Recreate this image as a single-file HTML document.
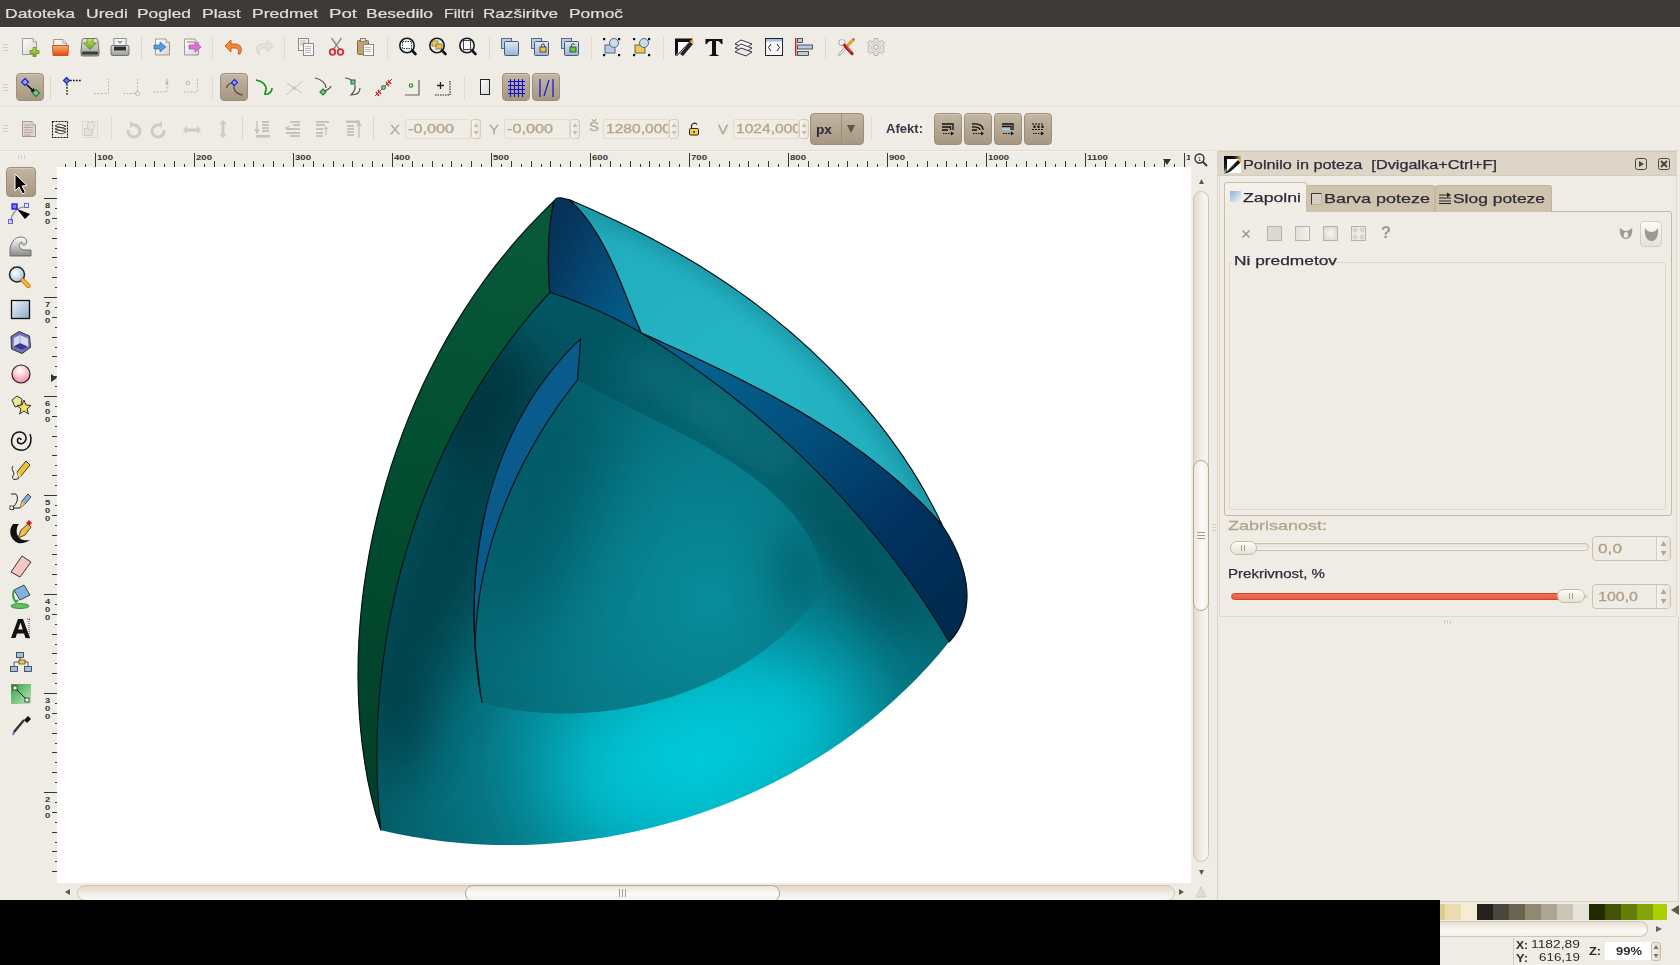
<!DOCTYPE html><html><head><meta charset="utf-8"><style>
*{box-sizing:border-box;margin:0;padding:0}
html,body{width:1680px;height:965px;overflow:hidden;background:#efebe5;font-family:"Liberation Sans",sans-serif;position:relative}
.a{position:absolute;display:block}
.t{position:absolute;white-space:nowrap;line-height:1}
</style></head><body><div class="a" style="left:0px;top:0px;width:1680px;height:27px;background:#3c3b37"></div>
<div class="a" style="left:0px;top:27px;width:1680px;height:1px;background:#f6f3ee"></div>
<div class="t" id="t0" style="left:5px;top:7px;font-size:13.5px;color:#e4dfd6;font-weight:normal;transform:scaleX(1.2952);transform-origin:0 0;-webkit-text-stroke:0.2px #e4dfd6;">Datoteka</div>
<div class="t" id="t1" style="left:86px;top:7px;font-size:13.5px;color:#e4dfd6;font-weight:normal;transform:scaleX(1.3017);transform-origin:0 0;-webkit-text-stroke:0.2px #e4dfd6;">Uredi</div>
<div class="t" id="t2" style="left:137px;top:7px;font-size:13.5px;color:#e4dfd6;font-weight:normal;transform:scaleX(1.2843);transform-origin:0 0;-webkit-text-stroke:0.2px #e4dfd6;">Pogled</div>
<div class="t" id="t3" style="left:202px;top:7px;font-size:13.5px;color:#e4dfd6;font-weight:normal;transform:scaleX(1.2993);transform-origin:0 0;-webkit-text-stroke:0.2px #e4dfd6;">Plast</div>
<div class="t" id="t4" style="left:252px;top:7px;font-size:13.5px;color:#e4dfd6;font-weight:normal;transform:scaleX(1.2933);transform-origin:0 0;-webkit-text-stroke:0.2px #e4dfd6;">Predmet</div>
<div class="t" id="t5" style="left:329px;top:7px;font-size:13.5px;color:#e4dfd6;font-weight:normal;transform:scaleX(1.3816);transform-origin:0 0;-webkit-text-stroke:0.2px #e4dfd6;">Pot</div>
<div class="t" id="t6" style="left:366px;top:7px;font-size:13.5px;color:#e4dfd6;font-weight:normal;transform:scaleX(1.2935);transform-origin:0 0;-webkit-text-stroke:0.2px #e4dfd6;">Besedilo</div>
<div class="t" id="t7" style="left:444px;top:7px;font-size:13.5px;color:#e4dfd6;font-weight:normal;transform:scaleX(1.1765);transform-origin:0 0;-webkit-text-stroke:0.2px #e4dfd6;">Filtri</div>
<div class="t" id="t8" style="left:483px;top:7px;font-size:13.5px;color:#e4dfd6;font-weight:normal;transform:scaleX(1.2655);transform-origin:0 0;-webkit-text-stroke:0.2px #e4dfd6;">Razširitve</div>
<div class="t" id="t9" style="left:569px;top:7px;font-size:13.5px;color:#e4dfd6;font-weight:normal;transform:scaleX(1.2848);transform-origin:0 0;-webkit-text-stroke:0.2px #e4dfd6;">Pomoč</div>
<div class="a" style="left:0px;top:106px;width:1680px;height:1px;background:#e6dfd4"></div>
<div class="a" style="left:0px;top:107px;width:1680px;height:1px;background:#f7f4f0"></div>
<div class="a" style="left:0px;top:150px;width:1680px;height:1px;background:#e2dbcf"></div>
<div class="a" style="left:0px;top:151px;width:1218px;height:1px;background:#f7f4f0"></div>
<div class="a" style="left:3px;top:44px;width:5px;height:1px;background:#d9ceba"></div>
<div class="a" style="left:3px;top:47px;width:5px;height:1px;background:#d9ceba"></div>
<div class="a" style="left:3px;top:50px;width:5px;height:1px;background:#d9ceba"></div>
<div class="a" style="left:3px;top:84px;width:5px;height:1px;background:#d9ceba"></div>
<div class="a" style="left:3px;top:87px;width:5px;height:1px;background:#d9ceba"></div>
<div class="a" style="left:3px;top:90px;width:5px;height:1px;background:#d9ceba"></div>
<div class="a" style="left:3px;top:125px;width:5px;height:1px;background:#d9ceba"></div>
<div class="a" style="left:3px;top:128px;width:5px;height:1px;background:#d9ceba"></div>
<div class="a" style="left:3px;top:131px;width:5px;height:1px;background:#d9ceba"></div>
<div class="a" style="left:141px;top:37px;width:1px;height:22px;background:#e0d8cb"></div>
<div class="a" style="left:212px;top:37px;width:1px;height:22px;background:#e0d8cb"></div>
<div class="a" style="left:284px;top:37px;width:1px;height:22px;background:#e0d8cb"></div>
<div class="a" style="left:387px;top:37px;width:1px;height:22px;background:#e0d8cb"></div>
<div class="a" style="left:489px;top:37px;width:1px;height:22px;background:#e0d8cb"></div>
<div class="a" style="left:591px;top:37px;width:1px;height:22px;background:#e0d8cb"></div>
<div class="a" style="left:663px;top:37px;width:1px;height:22px;background:#e0d8cb"></div>
<div class="a" style="left:825px;top:37px;width:1px;height:22px;background:#e0d8cb"></div>
<div class="a" style="left:50px;top:77px;width:1px;height:22px;background:#e0d8cb"></div>
<div class="a" style="left:212px;top:77px;width:1px;height:22px;background:#e0d8cb"></div>
<div class="a" style="left:464px;top:77px;width:1px;height:22px;background:#e0d8cb"></div>
<div class="a" style="left:111px;top:117px;width:1px;height:22px;background:#e0d8cb"></div>
<div class="a" style="left:242px;top:117px;width:1px;height:22px;background:#e0d8cb"></div>
<div class="a" style="left:373px;top:117px;width:1px;height:22px;background:#e0d8cb"></div>
<div class="a" style="left:871px;top:117px;width:1px;height:22px;background:#e0d8cb"></div>
<div class="a" style="left:16px;top:73px;width:28px;height:28px;border:1px solid #9d8e79;border-radius:4px;background:linear-gradient(#c3b6a2,#a59781);box-shadow:inset 0 1px 0 rgba(255,255,255,.25)"></div>
<div class="a" style="left:220px;top:73px;width:28px;height:28px;border:1px solid #9d8e79;border-radius:4px;background:linear-gradient(#c3b6a2,#a59781);box-shadow:inset 0 1px 0 rgba(255,255,255,.25)"></div>
<div class="a" style="left:502px;top:73px;width:28px;height:28px;border:1px solid #9d8e79;border-radius:4px;background:linear-gradient(#c3b6a2,#a59781);box-shadow:inset 0 1px 0 rgba(255,255,255,.25)"></div>
<div class="a" style="left:532px;top:73px;width:28px;height:28px;border:1px solid #9d8e79;border-radius:4px;background:linear-gradient(#c3b6a2,#a59781);box-shadow:inset 0 1px 0 rgba(255,255,255,.25)"></div>
<div class="a" style="left:934px;top:113px;width:28px;height:32px;border:1px solid #9d8e79;border-radius:4px;background:linear-gradient(#c3b6a2,#a59781);box-shadow:inset 0 1px 0 rgba(255,255,255,.25)"></div>
<div class="a" style="left:964px;top:113px;width:28px;height:32px;border:1px solid #9d8e79;border-radius:4px;background:linear-gradient(#c3b6a2,#a59781);box-shadow:inset 0 1px 0 rgba(255,255,255,.25)"></div>
<div class="a" style="left:994px;top:113px;width:28px;height:32px;border:1px solid #9d8e79;border-radius:4px;background:linear-gradient(#c3b6a2,#a59781);box-shadow:inset 0 1px 0 rgba(255,255,255,.25)"></div>
<div class="a" style="left:1024px;top:113px;width:28px;height:32px;border:1px solid #9d8e79;border-radius:4px;background:linear-gradient(#c3b6a2,#a59781);box-shadow:inset 0 1px 0 rgba(255,255,255,.25)"></div>
<div class="a" style="left:810px;top:113px;width:54px;height:32px;border:1px solid #9d8e79;border-radius:4px;background:linear-gradient(#c3b6a2,#a59781)"></div>
<div class="a" style="left:841px;top:114px;width:1px;height:30px;background:#9d8e79"></div>
<div class="a" style="left:18px;top:155px;width:1px;height:4px;background:#d9ceba"></div>
<div class="a" style="left:21px;top:155px;width:1px;height:4px;background:#d9ceba"></div>
<div class="a" style="left:24px;top:155px;width:1px;height:4px;background:#d9ceba"></div>
<div class="a" style="left:6px;top:167px;width:30px;height:30px;border:1px solid #9d8e79;border-radius:4px;background:linear-gradient(#c3b6a2,#a59781);box-shadow:inset 0 1px 0 rgba(255,255,255,.25)"></div>
<svg class="a" style="left:0px;top:150px" width="1190" height="17" viewBox="0 150 1190 17"><rect fill="#3a3430" x="65" y="164" width="1" height="3"/><rect fill="#3a3430" x="75" y="161" width="1" height="6"/><rect fill="#3a3430" x="85" y="164" width="1" height="3"/><rect fill="#3a3430" x="95" y="153" width="1" height="14"/><rect fill="#3a3430" x="105" y="164" width="1" height="3"/><rect fill="#3a3430" x="115" y="161" width="1" height="6"/><rect fill="#3a3430" x="125" y="164" width="1" height="3"/><rect fill="#3a3430" x="135" y="161" width="1" height="6"/><rect fill="#3a3430" x="145" y="164" width="1" height="3"/><rect fill="#3a3430" x="154" y="161" width="1" height="6"/><rect fill="#3a3430" x="164" y="164" width="1" height="3"/><rect fill="#3a3430" x="174" y="161" width="1" height="6"/><rect fill="#3a3430" x="184" y="164" width="1" height="3"/><rect fill="#3a3430" x="194" y="153" width="1" height="14"/><rect fill="#3a3430" x="204" y="164" width="1" height="3"/><rect fill="#3a3430" x="214" y="161" width="1" height="6"/><rect fill="#3a3430" x="224" y="164" width="1" height="3"/><rect fill="#3a3430" x="234" y="161" width="1" height="6"/><rect fill="#3a3430" x="244" y="164" width="1" height="3"/><rect fill="#3a3430" x="253" y="161" width="1" height="6"/><rect fill="#3a3430" x="263" y="164" width="1" height="3"/><rect fill="#3a3430" x="273" y="161" width="1" height="6"/><rect fill="#3a3430" x="283" y="164" width="1" height="3"/><rect fill="#3a3430" x="293" y="153" width="1" height="14"/><rect fill="#3a3430" x="303" y="164" width="1" height="3"/><rect fill="#3a3430" x="313" y="161" width="1" height="6"/><rect fill="#3a3430" x="323" y="164" width="1" height="3"/><rect fill="#3a3430" x="333" y="161" width="1" height="6"/><rect fill="#3a3430" x="343" y="164" width="1" height="3"/><rect fill="#3a3430" x="352" y="161" width="1" height="6"/><rect fill="#3a3430" x="362" y="164" width="1" height="3"/><rect fill="#3a3430" x="372" y="161" width="1" height="6"/><rect fill="#3a3430" x="382" y="164" width="1" height="3"/><rect fill="#3a3430" x="392" y="153" width="1" height="14"/><rect fill="#3a3430" x="402" y="164" width="1" height="3"/><rect fill="#3a3430" x="412" y="161" width="1" height="6"/><rect fill="#3a3430" x="422" y="164" width="1" height="3"/><rect fill="#3a3430" x="432" y="161" width="1" height="6"/><rect fill="#3a3430" x="442" y="164" width="1" height="3"/><rect fill="#3a3430" x="451" y="161" width="1" height="6"/><rect fill="#3a3430" x="461" y="164" width="1" height="3"/><rect fill="#3a3430" x="471" y="161" width="1" height="6"/><rect fill="#3a3430" x="481" y="164" width="1" height="3"/><rect fill="#3a3430" x="491" y="153" width="1" height="14"/><rect fill="#3a3430" x="501" y="164" width="1" height="3"/><rect fill="#3a3430" x="511" y="161" width="1" height="6"/><rect fill="#3a3430" x="521" y="164" width="1" height="3"/><rect fill="#3a3430" x="531" y="161" width="1" height="6"/><rect fill="#3a3430" x="541" y="164" width="1" height="3"/><rect fill="#3a3430" x="550" y="161" width="1" height="6"/><rect fill="#3a3430" x="560" y="164" width="1" height="3"/><rect fill="#3a3430" x="570" y="161" width="1" height="6"/><rect fill="#3a3430" x="580" y="164" width="1" height="3"/><rect fill="#3a3430" x="590" y="153" width="1" height="14"/><rect fill="#3a3430" x="600" y="164" width="1" height="3"/><rect fill="#3a3430" x="610" y="161" width="1" height="6"/><rect fill="#3a3430" x="620" y="164" width="1" height="3"/><rect fill="#3a3430" x="630" y="161" width="1" height="6"/><rect fill="#3a3430" x="640" y="164" width="1" height="3"/><rect fill="#3a3430" x="649" y="161" width="1" height="6"/><rect fill="#3a3430" x="659" y="164" width="1" height="3"/><rect fill="#3a3430" x="669" y="161" width="1" height="6"/><rect fill="#3a3430" x="679" y="164" width="1" height="3"/><rect fill="#3a3430" x="689" y="153" width="1" height="14"/><rect fill="#3a3430" x="699" y="164" width="1" height="3"/><rect fill="#3a3430" x="709" y="161" width="1" height="6"/><rect fill="#3a3430" x="719" y="164" width="1" height="3"/><rect fill="#3a3430" x="729" y="161" width="1" height="6"/><rect fill="#3a3430" x="739" y="164" width="1" height="3"/><rect fill="#3a3430" x="748" y="161" width="1" height="6"/><rect fill="#3a3430" x="758" y="164" width="1" height="3"/><rect fill="#3a3430" x="768" y="161" width="1" height="6"/><rect fill="#3a3430" x="778" y="164" width="1" height="3"/><rect fill="#3a3430" x="788" y="153" width="1" height="14"/><rect fill="#3a3430" x="798" y="164" width="1" height="3"/><rect fill="#3a3430" x="808" y="161" width="1" height="6"/><rect fill="#3a3430" x="818" y="164" width="1" height="3"/><rect fill="#3a3430" x="828" y="161" width="1" height="6"/><rect fill="#3a3430" x="838" y="164" width="1" height="3"/><rect fill="#3a3430" x="847" y="161" width="1" height="6"/><rect fill="#3a3430" x="857" y="164" width="1" height="3"/><rect fill="#3a3430" x="867" y="161" width="1" height="6"/><rect fill="#3a3430" x="877" y="164" width="1" height="3"/><rect fill="#3a3430" x="887" y="153" width="1" height="14"/><rect fill="#3a3430" x="897" y="164" width="1" height="3"/><rect fill="#3a3430" x="907" y="161" width="1" height="6"/><rect fill="#3a3430" x="917" y="164" width="1" height="3"/><rect fill="#3a3430" x="927" y="161" width="1" height="6"/><rect fill="#3a3430" x="937" y="164" width="1" height="3"/><rect fill="#3a3430" x="946" y="161" width="1" height="6"/><rect fill="#3a3430" x="956" y="164" width="1" height="3"/><rect fill="#3a3430" x="966" y="161" width="1" height="6"/><rect fill="#3a3430" x="976" y="164" width="1" height="3"/><rect fill="#3a3430" x="986" y="153" width="1" height="14"/><rect fill="#3a3430" x="996" y="164" width="1" height="3"/><rect fill="#3a3430" x="1006" y="161" width="1" height="6"/><rect fill="#3a3430" x="1016" y="164" width="1" height="3"/><rect fill="#3a3430" x="1026" y="161" width="1" height="6"/><rect fill="#3a3430" x="1036" y="164" width="1" height="3"/><rect fill="#3a3430" x="1045" y="161" width="1" height="6"/><rect fill="#3a3430" x="1055" y="164" width="1" height="3"/><rect fill="#3a3430" x="1065" y="161" width="1" height="6"/><rect fill="#3a3430" x="1075" y="164" width="1" height="3"/><rect fill="#3a3430" x="1085" y="153" width="1" height="14"/><rect fill="#3a3430" x="1095" y="164" width="1" height="3"/><rect fill="#3a3430" x="1105" y="161" width="1" height="6"/><rect fill="#3a3430" x="1115" y="164" width="1" height="3"/><rect fill="#3a3430" x="1125" y="161" width="1" height="6"/><rect fill="#3a3430" x="1135" y="164" width="1" height="3"/><rect fill="#3a3430" x="1144" y="161" width="1" height="6"/><rect fill="#3a3430" x="1154" y="164" width="1" height="3"/><rect fill="#3a3430" x="1164" y="161" width="1" height="6"/><rect fill="#3a3430" x="1174" y="164" width="1" height="3"/><rect fill="#3a3430" x="1184" y="153" width="1" height="14"/><text x="97" y="160" font-size="8" font-family="Liberation Sans" font-weight="bold" fill="#3a3430" textLength="16" lengthAdjust="spacingAndGlyphs">100</text><text x="196" y="160" font-size="8" font-family="Liberation Sans" font-weight="bold" fill="#3a3430" textLength="16" lengthAdjust="spacingAndGlyphs">200</text><text x="295" y="160" font-size="8" font-family="Liberation Sans" font-weight="bold" fill="#3a3430" textLength="16" lengthAdjust="spacingAndGlyphs">300</text><text x="394" y="160" font-size="8" font-family="Liberation Sans" font-weight="bold" fill="#3a3430" textLength="16" lengthAdjust="spacingAndGlyphs">400</text><text x="493" y="160" font-size="8" font-family="Liberation Sans" font-weight="bold" fill="#3a3430" textLength="16" lengthAdjust="spacingAndGlyphs">500</text><text x="592" y="160" font-size="8" font-family="Liberation Sans" font-weight="bold" fill="#3a3430" textLength="16" lengthAdjust="spacingAndGlyphs">600</text><text x="691" y="160" font-size="8" font-family="Liberation Sans" font-weight="bold" fill="#3a3430" textLength="16" lengthAdjust="spacingAndGlyphs">700</text><text x="790" y="160" font-size="8" font-family="Liberation Sans" font-weight="bold" fill="#3a3430" textLength="16" lengthAdjust="spacingAndGlyphs">800</text><text x="889" y="160" font-size="8" font-family="Liberation Sans" font-weight="bold" fill="#3a3430" textLength="16" lengthAdjust="spacingAndGlyphs">900</text><text x="988" y="160" font-size="8" font-family="Liberation Sans" font-weight="bold" fill="#3a3430" textLength="21" lengthAdjust="spacingAndGlyphs">1000</text><text x="1087" y="160" font-size="8" font-family="Liberation Sans" font-weight="bold" fill="#3a3430" textLength="21" lengthAdjust="spacingAndGlyphs">1100</text><text x="1186" y="160" font-size="8" font-family="Liberation Sans" font-weight="bold" fill="#3a3430" textLength="21" lengthAdjust="spacingAndGlyphs">1200</text><path d="M1163 159 h8 l-4 6z" fill="#333"/></svg>
<svg class="a" style="left:40px;top:167px" width="18" height="716" viewBox="40 167 18 716"><rect x="52" y="871" width="5" height="1" fill="#3a3430"/><rect x="55" y="861" width="2" height="1" fill="#3a3430"/><rect x="52" y="851" width="5" height="1" fill="#3a3430"/><rect x="55" y="842" width="2" height="1" fill="#3a3430"/><rect x="52" y="832" width="5" height="1" fill="#3a3430"/><rect x="55" y="822" width="2" height="1" fill="#3a3430"/><rect x="52" y="812" width="5" height="1" fill="#3a3430"/><rect x="55" y="802" width="2" height="1" fill="#3a3430"/><rect x="44" y="792" width="13" height="1" fill="#3a3430"/><rect x="55" y="782" width="2" height="1" fill="#3a3430"/><rect x="52" y="772" width="5" height="1" fill="#3a3430"/><rect x="55" y="762" width="2" height="1" fill="#3a3430"/><rect x="52" y="752" width="5" height="1" fill="#3a3430"/><rect x="55" y="743" width="2" height="1" fill="#3a3430"/><rect x="52" y="733" width="5" height="1" fill="#3a3430"/><rect x="55" y="723" width="2" height="1" fill="#3a3430"/><rect x="52" y="713" width="5" height="1" fill="#3a3430"/><rect x="55" y="703" width="2" height="1" fill="#3a3430"/><rect x="44" y="693" width="13" height="1" fill="#3a3430"/><rect x="55" y="683" width="2" height="1" fill="#3a3430"/><rect x="52" y="673" width="5" height="1" fill="#3a3430"/><rect x="55" y="663" width="2" height="1" fill="#3a3430"/><rect x="52" y="653" width="5" height="1" fill="#3a3430"/><rect x="55" y="644" width="2" height="1" fill="#3a3430"/><rect x="52" y="634" width="5" height="1" fill="#3a3430"/><rect x="55" y="624" width="2" height="1" fill="#3a3430"/><rect x="52" y="614" width="5" height="1" fill="#3a3430"/><rect x="55" y="604" width="2" height="1" fill="#3a3430"/><rect x="44" y="594" width="13" height="1" fill="#3a3430"/><rect x="55" y="584" width="2" height="1" fill="#3a3430"/><rect x="52" y="574" width="5" height="1" fill="#3a3430"/><rect x="55" y="564" width="2" height="1" fill="#3a3430"/><rect x="52" y="554" width="5" height="1" fill="#3a3430"/><rect x="55" y="545" width="2" height="1" fill="#3a3430"/><rect x="52" y="535" width="5" height="1" fill="#3a3430"/><rect x="55" y="525" width="2" height="1" fill="#3a3430"/><rect x="52" y="515" width="5" height="1" fill="#3a3430"/><rect x="55" y="505" width="2" height="1" fill="#3a3430"/><rect x="44" y="495" width="13" height="1" fill="#3a3430"/><rect x="55" y="485" width="2" height="1" fill="#3a3430"/><rect x="52" y="475" width="5" height="1" fill="#3a3430"/><rect x="55" y="465" width="2" height="1" fill="#3a3430"/><rect x="52" y="455" width="5" height="1" fill="#3a3430"/><rect x="55" y="446" width="2" height="1" fill="#3a3430"/><rect x="52" y="436" width="5" height="1" fill="#3a3430"/><rect x="55" y="426" width="2" height="1" fill="#3a3430"/><rect x="52" y="416" width="5" height="1" fill="#3a3430"/><rect x="55" y="406" width="2" height="1" fill="#3a3430"/><rect x="44" y="396" width="13" height="1" fill="#3a3430"/><rect x="55" y="386" width="2" height="1" fill="#3a3430"/><rect x="52" y="376" width="5" height="1" fill="#3a3430"/><rect x="55" y="366" width="2" height="1" fill="#3a3430"/><rect x="52" y="356" width="5" height="1" fill="#3a3430"/><rect x="55" y="347" width="2" height="1" fill="#3a3430"/><rect x="52" y="337" width="5" height="1" fill="#3a3430"/><rect x="55" y="327" width="2" height="1" fill="#3a3430"/><rect x="52" y="317" width="5" height="1" fill="#3a3430"/><rect x="55" y="307" width="2" height="1" fill="#3a3430"/><rect x="44" y="297" width="13" height="1" fill="#3a3430"/><rect x="55" y="287" width="2" height="1" fill="#3a3430"/><rect x="52" y="277" width="5" height="1" fill="#3a3430"/><rect x="55" y="267" width="2" height="1" fill="#3a3430"/><rect x="52" y="257" width="5" height="1" fill="#3a3430"/><rect x="55" y="248" width="2" height="1" fill="#3a3430"/><rect x="52" y="238" width="5" height="1" fill="#3a3430"/><rect x="55" y="228" width="2" height="1" fill="#3a3430"/><rect x="52" y="218" width="5" height="1" fill="#3a3430"/><rect x="55" y="208" width="2" height="1" fill="#3a3430"/><rect x="44" y="198" width="13" height="1" fill="#3a3430"/><rect x="55" y="188" width="2" height="1" fill="#3a3430"/><rect x="52" y="178" width="5" height="1" fill="#3a3430"/><text x="47.5" y="802" font-size="7.5" font-family="Liberation Sans" font-weight="bold" fill="#3a3430" text-anchor="middle" transform="translate(47.5 0) scale(1.25 1) translate(-47.5 0)">2</text><text x="47.5" y="810" font-size="7.5" font-family="Liberation Sans" font-weight="bold" fill="#3a3430" text-anchor="middle" transform="translate(47.5 0) scale(1.25 1) translate(-47.5 0)">0</text><text x="47.5" y="818" font-size="7.5" font-family="Liberation Sans" font-weight="bold" fill="#3a3430" text-anchor="middle" transform="translate(47.5 0) scale(1.25 1) translate(-47.5 0)">0</text><text x="47.5" y="703" font-size="7.5" font-family="Liberation Sans" font-weight="bold" fill="#3a3430" text-anchor="middle" transform="translate(47.5 0) scale(1.25 1) translate(-47.5 0)">3</text><text x="47.5" y="711" font-size="7.5" font-family="Liberation Sans" font-weight="bold" fill="#3a3430" text-anchor="middle" transform="translate(47.5 0) scale(1.25 1) translate(-47.5 0)">0</text><text x="47.5" y="719" font-size="7.5" font-family="Liberation Sans" font-weight="bold" fill="#3a3430" text-anchor="middle" transform="translate(47.5 0) scale(1.25 1) translate(-47.5 0)">0</text><text x="47.5" y="604" font-size="7.5" font-family="Liberation Sans" font-weight="bold" fill="#3a3430" text-anchor="middle" transform="translate(47.5 0) scale(1.25 1) translate(-47.5 0)">4</text><text x="47.5" y="612" font-size="7.5" font-family="Liberation Sans" font-weight="bold" fill="#3a3430" text-anchor="middle" transform="translate(47.5 0) scale(1.25 1) translate(-47.5 0)">0</text><text x="47.5" y="620" font-size="7.5" font-family="Liberation Sans" font-weight="bold" fill="#3a3430" text-anchor="middle" transform="translate(47.5 0) scale(1.25 1) translate(-47.5 0)">0</text><text x="47.5" y="505" font-size="7.5" font-family="Liberation Sans" font-weight="bold" fill="#3a3430" text-anchor="middle" transform="translate(47.5 0) scale(1.25 1) translate(-47.5 0)">5</text><text x="47.5" y="513" font-size="7.5" font-family="Liberation Sans" font-weight="bold" fill="#3a3430" text-anchor="middle" transform="translate(47.5 0) scale(1.25 1) translate(-47.5 0)">0</text><text x="47.5" y="521" font-size="7.5" font-family="Liberation Sans" font-weight="bold" fill="#3a3430" text-anchor="middle" transform="translate(47.5 0) scale(1.25 1) translate(-47.5 0)">0</text><text x="47.5" y="406" font-size="7.5" font-family="Liberation Sans" font-weight="bold" fill="#3a3430" text-anchor="middle" transform="translate(47.5 0) scale(1.25 1) translate(-47.5 0)">6</text><text x="47.5" y="414" font-size="7.5" font-family="Liberation Sans" font-weight="bold" fill="#3a3430" text-anchor="middle" transform="translate(47.5 0) scale(1.25 1) translate(-47.5 0)">0</text><text x="47.5" y="422" font-size="7.5" font-family="Liberation Sans" font-weight="bold" fill="#3a3430" text-anchor="middle" transform="translate(47.5 0) scale(1.25 1) translate(-47.5 0)">0</text><text x="47.5" y="307" font-size="7.5" font-family="Liberation Sans" font-weight="bold" fill="#3a3430" text-anchor="middle" transform="translate(47.5 0) scale(1.25 1) translate(-47.5 0)">7</text><text x="47.5" y="315" font-size="7.5" font-family="Liberation Sans" font-weight="bold" fill="#3a3430" text-anchor="middle" transform="translate(47.5 0) scale(1.25 1) translate(-47.5 0)">0</text><text x="47.5" y="323" font-size="7.5" font-family="Liberation Sans" font-weight="bold" fill="#3a3430" text-anchor="middle" transform="translate(47.5 0) scale(1.25 1) translate(-47.5 0)">0</text><text x="47.5" y="208" font-size="7.5" font-family="Liberation Sans" font-weight="bold" fill="#3a3430" text-anchor="middle" transform="translate(47.5 0) scale(1.25 1) translate(-47.5 0)">8</text><text x="47.5" y="216" font-size="7.5" font-family="Liberation Sans" font-weight="bold" fill="#3a3430" text-anchor="middle" transform="translate(47.5 0) scale(1.25 1) translate(-47.5 0)">0</text><text x="47.5" y="224" font-size="7.5" font-family="Liberation Sans" font-weight="bold" fill="#3a3430" text-anchor="middle" transform="translate(47.5 0) scale(1.25 1) translate(-47.5 0)">0</text><path d="M51 374 v8 l6 -4z" fill="#333"/></svg>
<div class="a" style="left:57px;top:167px;width:1134px;height:716px;background:#fff"></div>
<svg class="a" style="left:1193px;top:152px" width="16" height="16" viewBox="0 0 16 16"><circle cx="6.5" cy="6.5" r="4.5" fill="none" stroke="#333" stroke-width="1.4"/><path d="M9.5 9.5 L14 14" stroke="#333" stroke-width="1.8"/><text x="6.5" y="9" font-size="6" text-anchor="middle" font-family="Liberation Sans" fill="#333">1</text></svg>
<div class="a" style="left:1191px;top:167px;width:19px;height:717px;background:#efebe5"></div>
<div class="a" style="left:1193px;top:191px;width:16px;height:671px;border:1px solid #d3c7b3;border-radius:8px;background:linear-gradient(90deg,#e2dacd,#f3efe9 60%,#f8f6f2)"></div>
<svg class="a" style="left:1195px;top:176px" width="12" height="10" viewBox="0 0 12 10"><path d="M4 8 L6.5 3 L9 8z" fill="#5e5850"/></svg>
<svg class="a" style="left:1195px;top:868px" width="12" height="10" viewBox="0 0 12 10"><path d="M4 2 L6.5 7 L9 2z" fill="#5e5850"/></svg>
<div class="a" style="left:1193px;top:460px;width:16px;height:151px;border:1px solid #b8a88c;border-radius:8px;background:linear-gradient(90deg,#ece6dc,#fbfaf7 55%,#f4f0ea)"></div>
<div class="a" style="left:1197px;top:532px;width:8px;height:1px;background:#ab9d86"></div>
<div class="a" style="left:1197px;top:535px;width:8px;height:1px;background:#ab9d86"></div>
<div class="a" style="left:1197px;top:538px;width:8px;height:1px;background:#ab9d86"></div>
<div class="a" style="left:57px;top:883px;width:1134px;height:17px;background:#efebe5"></div>
<div class="a" style="left:77px;top:885px;width:1098px;height:16px;border:1px solid #d3c7b3;border-radius:8px;background:linear-gradient(#e2d8c8,#f3efe9 60%,#faf8f4)"></div>
<svg class="a" style="left:62px;top:887px" width="10" height="10" viewBox="0 0 10 10"><path d="M8 2 L3 5 L8 8z" fill="#5e5850"/></svg>
<svg class="a" style="left:1177px;top:887px" width="10" height="10" viewBox="0 0 10 10"><path d="M2 2 L7 5 L2 8z" fill="#5e5850"/></svg>
<div class="a" style="left:465px;top:885px;width:315px;height:17px;border:1px solid #b8a88c;border-radius:8px;background:linear-gradient(#ebe4d9,#fbfaf7 55%,#f4f0ea)"></div>
<div class="a" style="left:619px;top:889px;width:1px;height:8px;background:#ab9d86"></div>
<div class="a" style="left:622px;top:889px;width:1px;height:8px;background:#ab9d86"></div>
<div class="a" style="left:625px;top:889px;width:1px;height:8px;background:#ab9d86"></div>
<svg class="a" style="left:1192px;top:884px" width="18" height="16" viewBox="0 0 18 16"><path d="M4 13 L9 3 L14 13z" fill="#e2ddd4" stroke="#c4bcb0" stroke-width="0.6"/></svg>
<div class="a" style="left:0px;top:900px;width:1440px;height:65px;background:#000"></div>
<div class="a" style="left:1440px;top:900px;width:240px;height:65px;background:#efebe5"></div>
<div class="a" style="left:1440px;top:901px;width:236px;height:1px;background:#d9d0c2"></div>
<div class="a" style="left:1440px;top:904px;width:5px;height:16px;background:#dccb8a"></div>
<div class="a" style="left:1445px;top:904px;width:16px;height:16px;background:#e8dcb0"></div>
<div class="a" style="left:1461px;top:904px;width:16px;height:16px;background:#f3edd4"></div>
<div class="a" style="left:1477px;top:904px;width:16px;height:16px;background:#23221e"></div>
<div class="a" style="left:1493px;top:904px;width:16px;height:16px;background:#48453a"></div>
<div class="a" style="left:1509px;top:904px;width:16px;height:16px;background:#6a6453"></div>
<div class="a" style="left:1525px;top:904px;width:16px;height:16px;background:#928a70"></div>
<div class="a" style="left:1541px;top:904px;width:16px;height:16px;background:#ada593"></div>
<div class="a" style="left:1557px;top:904px;width:16px;height:16px;background:#c9c5b9"></div>
<div class="a" style="left:1573px;top:904px;width:16px;height:16px;background:#e5e3dc"></div>
<div class="a" style="left:1589px;top:904px;width:16px;height:16px;background:#222a02"></div>
<div class="a" style="left:1605px;top:904px;width:16px;height:16px;background:#425305"></div>
<div class="a" style="left:1621px;top:904px;width:16px;height:16px;background:#637d07"></div>
<div class="a" style="left:1637px;top:904px;width:16px;height:16px;background:#84a608"></div>
<div class="a" style="left:1653px;top:904px;width:14px;height:16px;background:#a8d102"></div>
<svg class="a" style="left:1668px;top:903px" width="12" height="14" viewBox="0 0 12 14"><path d="M11 2 L3 7 L11 12z" fill="#5e5950"/></svg>
<div class="a" style="left:1440px;top:921px;width:208px;height:16px;border:1px solid #d2c5b0;border-left:none;border-radius:0 8px 8px 0;background:linear-gradient(#e6dfd3,#fbf9f6 60%,#f3efe9)"></div>
<svg class="a" style="left:1654px;top:924px" width="10" height="10" viewBox="0 0 10 10"><path d="M2 2 L8 5 L2 8z" fill="#6b655c"/></svg>
<div class="a" style="left:1513px;top:938px;width:1px;height:27px;background:#d6cdbd"></div>
<div class="t" id="t10" style="left:1516px;top:940px;font-size:10.5px;color:#2e2a27;font-weight:bold;transform:scaleX(1.1429);transform-origin:0 0;">X:</div>
<div class="t" id="t11" style="left:1531px;top:939px;font-size:11.5px;color:#2e2a27;font-weight:normal;transform:scaleX(1.2034);transform-origin:0 0;">1182,89</div>
<div class="t" id="t12" style="left:1516px;top:953px;font-size:10.5px;color:#2e2a27;font-weight:bold;transform:scaleX(1.2327);transform-origin:0 0;">Y:</div>
<div class="t" id="t13" style="left:1539px;top:952px;font-size:11.5px;color:#2e2a27;font-weight:normal;transform:scaleX(1.1652);transform-origin:0 0;">616,19</div>
<div class="t" id="t14" style="left:1589px;top:946px;font-size:11px;color:#2e2a27;font-weight:bold;transform:scaleX(1.1549);transform-origin:0 0;">Z:</div>
<div class="a" style="left:1605px;top:942px;width:46px;height:18px;background:#fff"></div>
<div class="t" id="t15" style="left:1616px;top:946px;font-size:11.5px;color:#2e2a27;font-weight:bold;transform:scaleX(1.1289);transform-origin:0 0;">99%</div>
<div class="a" style="left:1651px;top:942px;width:10px;height:19px;border:1px solid #c9bca7;border-radius:3px;background:linear-gradient(90deg,#f3efe9,#e4ddd1)"></div>
<svg class="a" style="left:1652px;top:943px" width="8" height="17" viewBox="0 0 8 17"><path d="M1.5 6 L4 2 L6.5 6z M1.5 11 L4 15 L6.5 11z" fill="#7b756b"/></svg>
<svg class="a" style="left:0px;top:0px" width="1680" height="965" viewBox="0 0 1680 965"><defs>
<clipPath id="cvclip"><rect x="57" y="167" width="1134" height="716"/></clipPath>
<clipPath id="silc"><path d="M554.0 201.0 L541.4 213.4 L529.2 226.1 L517.4 239.1 L506.1 252.5 L495.1 266.2 L484.6 280.2 L474.5 294.5 L464.8 309.0 L455.6 323.9 L446.7 338.9 L438.3 354.3 L430.3 369.8 L422.6 385.6 L415.5 401.6 L408.7 417.7 L402.3 434.1 L396.4 450.6 L390.8 467.3 L385.7 484.2 L381.0 501.1 L376.7 518.2 L372.8 535.4 L369.4 552.7 L366.4 570.1 L363.8 587.5 L361.7 605.0 L360.1 622.6 L358.9 640.1 L358.2 657.7 L358.0 675.2 L358.3 692.8 L359.1 710.3 L360.4 727.7 L362.3 745.1 L364.7 762.4 L367.6 779.6 L371.3 796.7 L375.6 813.5 L380.8 830.2 L396.6 833.7 L412.4 836.7 L428.4 839.3 L444.4 841.4 L460.5 843.0 L476.6 844.2 L492.7 844.9 L508.9 845.1 L525.1 844.9 L541.2 844.2 L557.4 843.1 L573.5 841.6 L589.6 839.6 L605.6 837.2 L621.5 834.3 L637.4 831.0 L653.2 827.3 L668.8 823.1 L684.4 818.5 L699.7 813.5 L715.0 808.1 L730.1 802.2 L745.0 796.0 L759.7 789.3 L774.2 782.2 L788.5 774.7 L802.6 766.8 L816.5 758.6 L830.0 749.9 L843.4 740.8 L856.4 731.3 L869.2 721.5 L881.6 711.2 L893.8 700.6 L905.6 689.6 L917.0 678.2 L928.1 666.4 L938.9 654.3 L949.2 641.8 L951.5 639.3 L953.7 636.7 L955.7 634.0 L957.5 631.3 L959.1 628.5 L960.6 625.6 L961.9 622.7 L963.0 619.8 L964.0 616.9 L964.9 613.8 L965.6 610.8 L966.1 607.7 L966.5 604.6 L966.8 601.5 L967.0 598.4 L967.0 595.2 L966.9 592.0 L966.7 588.9 L966.4 585.7 L966.0 582.5 L965.4 579.3 L964.8 576.1 L964.1 572.9 L963.2 569.8 L962.3 566.6 L961.3 563.5 L960.3 560.4 L959.1 557.3 L957.9 554.2 L956.6 551.2 L955.2 548.2 L953.8 545.3 L952.4 542.3 L950.8 539.5 L949.3 536.7 L947.7 533.9 L946.0 531.2 L944.3 528.6 L942.6 526.0 L937.0 514.3 L931.0 502.7 L924.7 491.3 L918.2 480.1 L911.4 469.1 L904.3 458.2 L896.9 447.6 L889.3 437.1 L881.4 426.7 L873.3 416.6 L865.0 406.6 L856.4 396.8 L847.7 387.1 L838.8 377.7 L829.7 368.4 L820.4 359.3 L810.9 350.3 L801.3 341.6 L791.6 333.0 L781.6 324.6 L771.6 316.4 L761.4 308.4 L751.0 300.5 L740.5 292.9 L729.9 285.5 L719.1 278.2 L708.2 271.2 L697.2 264.3 L686.1 257.7 L674.8 251.2 L663.5 244.9 L652.0 238.7 L640.5 232.7 L628.8 226.9 L617.1 221.2 L605.3 215.7 L593.5 210.3 L581.6 205.0 L569.6 199.8 L567.5 199.3 L565.0 198.7 L562.5 198.1 L560.0 197.8 L557.6 198.1 L555.6 199.1 L554.0 201.0Z"/></clipPath>
<clipPath id="cavc"><path d="M577.5 380.0 L572.9 385.8 L568.5 391.6 L564.1 397.5 L559.7 403.5 L555.5 409.6 L551.4 415.7 L547.3 421.9 L543.3 428.2 L539.5 434.5 L535.7 440.9 L532.0 447.4 L528.4 453.9 L524.9 460.4 L521.5 467.1 L518.2 473.7 L515.0 480.5 L511.9 487.2 L509.0 494.1 L506.1 500.9 L503.4 507.8 L500.7 514.8 L498.2 521.8 L495.8 528.8 L493.5 535.9 L491.4 543.0 L489.4 550.1 L487.5 557.3 L485.7 564.5 L484.0 571.7 L482.5 578.9 L481.1 586.2 L479.9 593.5 L478.8 600.8 L477.8 608.1 L477.0 615.5 L476.3 622.8 L475.8 630.2 L475.4 637.6 L475.2 645.0 L478.9 683.2 L480.3 693.1 L482.0 703.0 L491.2 705.3 L500.5 707.4 L509.9 709.1 L519.4 710.6 L528.9 711.7 L538.5 712.6 L548.1 713.2 L557.8 713.5 L567.4 713.6 L577.1 713.3 L586.9 712.8 L596.6 712.1 L606.3 711.0 L615.9 709.7 L625.6 708.1 L635.2 706.3 L644.7 704.2 L654.2 701.8 L663.6 699.2 L673.0 696.4 L682.2 693.2 L691.4 689.8 L700.4 686.2 L709.3 682.3 L718.1 678.2 L726.7 673.8 L735.2 669.2 L743.5 664.3 L751.7 659.1 L759.6 653.7 L767.4 648.0 L774.9 642.1 L782.3 635.9 L789.4 629.4 L796.2 622.7 L802.8 615.7 L809.2 608.5 L815.2 601.0 L821.0 593.2 L821.8 584.2 L821.6 575.5 L820.5 567.1 L818.5 558.9 L815.8 550.9 L812.4 543.2 L808.3 535.8 L803.8 528.5 L798.8 521.6 L793.4 514.8 L787.7 508.3 L781.7 502.0 L775.5 496.0 L769.0 490.1 L762.4 484.5 L755.5 479.0 L748.4 473.7 L741.2 468.5 L733.8 463.6 L726.2 458.7 L718.6 454.0 L710.8 449.4 L702.9 445.0 L695.0 440.6 L687.0 436.3 L679.0 432.1 L670.9 428.0 L662.8 423.9 L654.7 419.9 L646.6 415.9 L638.6 412.0 L630.6 408.0 L622.7 404.1 L614.9 400.1 L607.1 396.2 L599.5 392.2 L592.0 388.2 L584.7 384.1 L577.5 380.0Z"/></clipPath>
<clipPath id="lightc"><path d="M569.6 199.8 L575.4 205.5 L580.8 211.4 L585.8 217.6 L590.6 224.0 L595.0 230.7 L599.2 237.5 L603.1 244.5 L606.9 251.6 L610.4 258.8 L613.8 266.2 L617.0 273.6 L620.2 281.0 L623.2 288.5 L626.2 296.0 L629.2 303.5 L632.2 311.0 L635.2 318.4 L638.3 325.8 L641.4 333.0 L649.8 336.8 L658.1 340.6 L666.5 344.4 L674.9 348.2 L683.3 352.1 L691.7 356.0 L700.1 359.9 L708.5 363.9 L716.8 367.9 L725.2 371.9 L733.5 376.0 L741.8 380.2 L750.1 384.4 L758.3 388.7 L766.5 393.0 L774.7 397.4 L782.8 401.9 L790.9 406.5 L798.9 411.1 L806.8 415.8 L814.7 420.6 L822.6 425.5 L830.4 430.5 L838.1 435.6 L845.7 440.8 L853.3 446.1 L860.7 451.5 L868.1 457.0 L875.4 462.6 L882.6 468.4 L889.7 474.2 L896.7 480.2 L903.6 486.3 L910.4 492.6 L917.1 499.0 L923.7 505.5 L930.1 512.2 L936.4 519.0 L942.6 526.0 L937.0 514.3 L931.0 502.7 L924.7 491.3 L918.2 480.1 L911.4 469.1 L904.3 458.2 L896.9 447.6 L889.3 437.1 L881.4 426.7 L873.3 416.6 L865.0 406.6 L856.4 396.8 L847.7 387.1 L838.8 377.7 L829.7 368.4 L820.4 359.3 L810.9 350.3 L801.3 341.6 L791.6 333.0 L781.6 324.6 L771.6 316.4 L761.4 308.4 L751.0 300.5 L740.5 292.9 L729.9 285.5 L719.1 278.2 L708.2 271.2 L697.2 264.3 L686.1 257.7 L674.8 251.2 L663.5 244.9 L652.0 238.7 L640.5 232.7 L628.8 226.9 L617.1 221.2 L605.3 215.7 L593.5 210.3 L581.6 205.0 L569.6 199.8Z"/></clipPath>
<clipPath id="stripc"><path d="M641.4 333.0 L649.8 336.8 L658.1 340.6 L666.5 344.4 L674.9 348.2 L683.3 352.1 L691.7 356.0 L700.1 359.9 L708.5 363.9 L716.8 367.9 L725.2 371.9 L733.5 376.0 L741.8 380.2 L750.1 384.4 L758.3 388.7 L766.5 393.0 L774.7 397.4 L782.8 401.9 L790.9 406.5 L798.9 411.1 L806.8 415.8 L814.7 420.6 L822.6 425.5 L830.4 430.5 L838.1 435.6 L845.7 440.8 L853.3 446.1 L860.7 451.5 L868.1 457.0 L875.4 462.6 L882.6 468.4 L889.7 474.2 L896.7 480.2 L903.6 486.3 L910.4 492.6 L917.1 499.0 L923.7 505.5 L930.1 512.2 L936.4 519.0 L942.6 526.0 L944.3 528.6 L946.0 531.2 L947.7 533.9 L949.3 536.7 L950.8 539.5 L952.4 542.3 L953.8 545.3 L955.2 548.2 L956.6 551.2 L957.9 554.2 L959.1 557.3 L960.3 560.4 L961.3 563.5 L962.3 566.6 L963.2 569.8 L964.1 572.9 L964.8 576.1 L965.4 579.3 L966.0 582.5 L966.4 585.7 L966.7 588.9 L966.9 592.0 L967.0 595.2 L967.0 598.4 L966.8 601.5 L966.5 604.6 L966.1 607.7 L965.6 610.8 L964.9 613.8 L964.0 616.9 L963.0 619.8 L961.9 622.7 L960.6 625.6 L959.1 628.5 L957.5 631.3 L955.7 634.0 L953.7 636.7 L951.5 639.3 L949.2 641.8 L943.4 632.1 L937.5 622.5 L931.4 612.9 L925.2 603.5 L918.9 594.1 L912.4 584.8 L905.9 575.6 L899.2 566.6 L892.4 557.6 L885.4 548.6 L878.4 539.8 L871.2 531.1 L864.0 522.5 L856.6 514.0 L849.1 505.5 L841.5 497.2 L833.8 488.9 L826.0 480.8 L818.1 472.7 L810.1 464.8 L802.0 456.9 L793.8 449.2 L785.5 441.5 L777.2 434.0 L768.7 426.5 L760.1 419.2 L751.5 411.9 L742.7 404.8 L733.9 397.7 L725.0 390.8 L716.0 383.9 L706.9 377.2 L697.8 370.6 L688.6 364.0 L679.3 357.6 L669.9 351.3 L660.5 345.1 L651.0 339.0 L641.4 333.0Z"/></clipPath>
<clipPath id="greenc"><path d="M554.0 201.0 L541.4 213.4 L529.2 226.1 L517.4 239.1 L506.1 252.5 L495.1 266.2 L484.6 280.2 L474.5 294.5 L464.8 309.0 L455.6 323.9 L446.7 338.9 L438.3 354.3 L430.3 369.8 L422.6 385.6 L415.5 401.6 L408.7 417.7 L402.3 434.1 L396.4 450.6 L390.8 467.3 L385.7 484.2 L381.0 501.1 L376.7 518.2 L372.8 535.4 L369.4 552.7 L366.4 570.1 L363.8 587.5 L361.7 605.0 L360.1 622.6 L358.9 640.1 L358.2 657.7 L358.0 675.2 L358.3 692.8 L359.1 710.3 L360.4 727.7 L362.3 745.1 L364.7 762.4 L367.6 779.6 L371.3 796.7 L375.6 813.5 L380.8 830.2 L379.4 815.5 L378.3 800.8 L377.5 786.0 L377.0 771.2 L376.9 756.4 L377.0 741.5 L377.5 726.6 L378.2 711.8 L379.3 696.9 L380.6 682.0 L382.3 667.2 L384.3 652.4 L386.5 637.6 L389.1 622.8 L392.0 608.2 L395.2 593.5 L398.6 579.0 L402.4 564.5 L406.5 550.1 L410.9 535.8 L415.5 521.6 L420.5 507.5 L425.8 493.5 L431.3 479.7 L437.2 466.0 L443.3 452.4 L449.8 439.0 L456.5 425.7 L463.5 412.6 L470.8 399.7 L478.5 386.9 L486.4 374.4 L494.5 362.0 L503.0 349.8 L511.8 337.9 L520.9 326.2 L530.2 314.7 L539.9 303.5 L549.8 292.5 L549.2 284.2 L548.8 275.8 L548.5 267.5 L548.4 259.1 L548.5 250.8 L548.7 242.4 L549.3 234.1 L550.0 225.8 L551.0 217.5 L552.4 209.2 L554.0 201.0Z"/></clipPath>
<clipPath id="facetc"><path d="M554.0 201.0 L555.6 199.1 L557.6 198.1 L560.0 197.8 L562.5 198.1 L565.0 198.7 L567.5 199.3 L569.6 199.8 L575.4 205.5 L580.8 211.4 L585.8 217.6 L590.6 224.0 L595.0 230.7 L599.2 237.5 L603.1 244.5 L606.9 251.6 L610.4 258.8 L613.8 266.2 L617.0 273.6 L620.2 281.0 L623.2 288.5 L626.2 296.0 L629.2 303.5 L632.2 311.0 L635.2 318.4 L638.3 325.8 L641.4 333.0 L633.5 328.4 L625.5 324.0 L617.4 319.8 L609.2 315.8 L600.9 311.9 L592.6 308.2 L584.2 304.7 L575.7 301.4 L567.2 298.2 L558.5 295.3 L549.8 292.5 L549.2 284.2 L548.8 275.8 L548.5 267.5 L548.4 259.1 L548.5 250.8 L548.7 242.4 L549.3 234.1 L550.0 225.8 L551.0 217.5 L552.4 209.2 L554.0 201.0Z"/></clipPath>
<radialGradient id="band" gradientUnits="userSpaceOnUse" cx="700" cy="760" r="400" gradientTransform="translate(700 760) scale(1 0.9) translate(-700 -760)">
<stop offset="0" stop-color="#00c4d4"/><stop offset="0.28" stop-color="#03a8b8"/><stop offset="0.55" stop-color="#067684"/><stop offset="0.8" stop-color="#055e6a"/><stop offset="1" stop-color="#055a66"/></radialGradient>
<radialGradient id="cavg" gradientUnits="userSpaceOnUse" cx="710" cy="600" r="290">
<stop offset="0" stop-color="#088c9a"/><stop offset="0.5" stop-color="#077a88"/><stop offset="1" stop-color="#05626e"/></radialGradient>
<linearGradient id="greeng" gradientUnits="userSpaceOnUse" x1="520" y1="230" x2="370" y2="820">
<stop offset="0" stop-color="#075839"/><stop offset="0.5" stop-color="#024c30"/><stop offset="1" stop-color="#003f27"/></linearGradient>
<linearGradient id="facetg" gradientUnits="userSpaceOnUse" x1="550" y1="250" x2="635" y2="290">
<stop offset="0" stop-color="#06335a"/><stop offset="1" stop-color="#045a88"/></linearGradient>
<radialGradient id="lightg" gradientUnits="userSpaceOnUse" cx="740" cy="380" r="300">
<stop offset="0" stop-color="#25b6c6"/><stop offset="0.6" stop-color="#22aebe"/><stop offset="1" stop-color="#1f9cac"/></radialGradient>
<linearGradient id="stripg" gradientUnits="userSpaceOnUse" x1="700" y1="360" x2="950" y2="620">
<stop offset="0" stop-color="#05628e"/><stop offset="0.35" stop-color="#034f7c"/><stop offset="0.7" stop-color="#013260"/><stop offset="1" stop-color="#002a4e"/></linearGradient>
<filter id="bl20" x="-150%" y="-150%" width="400%" height="400%"><feGaussianBlur stdDeviation="20"/></filter>
<filter id="bl35" x="-250%" y="-250%" width="600%" height="600%"><feGaussianBlur stdDeviation="35"/></filter>
<filter id="bl8" x="-50%" y="-50%" width="200%" height="200%"><feGaussianBlur stdDeviation="8"/></filter>
<filter id="bl4" x="-50%" y="-50%" width="200%" height="200%"><feGaussianBlur stdDeviation="3"/></filter>
<filter id="bl2" x="-10%" y="-10%" width="120%" height="120%"><feGaussianBlur stdDeviation="1.5"/></filter>
</defs><g clip-path="url(#cvclip)"><path d="M554.0 201.0 L541.4 213.4 L529.2 226.1 L517.4 239.1 L506.1 252.5 L495.1 266.2 L484.6 280.2 L474.5 294.5 L464.8 309.0 L455.6 323.9 L446.7 338.9 L438.3 354.3 L430.3 369.8 L422.6 385.6 L415.5 401.6 L408.7 417.7 L402.3 434.1 L396.4 450.6 L390.8 467.3 L385.7 484.2 L381.0 501.1 L376.7 518.2 L372.8 535.4 L369.4 552.7 L366.4 570.1 L363.8 587.5 L361.7 605.0 L360.1 622.6 L358.9 640.1 L358.2 657.7 L358.0 675.2 L358.3 692.8 L359.1 710.3 L360.4 727.7 L362.3 745.1 L364.7 762.4 L367.6 779.6 L371.3 796.7 L375.6 813.5 L380.8 830.2 L396.6 833.7 L412.4 836.7 L428.4 839.3 L444.4 841.4 L460.5 843.0 L476.6 844.2 L492.7 844.9 L508.9 845.1 L525.1 844.9 L541.2 844.2 L557.4 843.1 L573.5 841.6 L589.6 839.6 L605.6 837.2 L621.5 834.3 L637.4 831.0 L653.2 827.3 L668.8 823.1 L684.4 818.5 L699.7 813.5 L715.0 808.1 L730.1 802.2 L745.0 796.0 L759.7 789.3 L774.2 782.2 L788.5 774.7 L802.6 766.8 L816.5 758.6 L830.0 749.9 L843.4 740.8 L856.4 731.3 L869.2 721.5 L881.6 711.2 L893.8 700.6 L905.6 689.6 L917.0 678.2 L928.1 666.4 L938.9 654.3 L949.2 641.8 L951.5 639.3 L953.7 636.7 L955.7 634.0 L957.5 631.3 L959.1 628.5 L960.6 625.6 L961.9 622.7 L963.0 619.8 L964.0 616.9 L964.9 613.8 L965.6 610.8 L966.1 607.7 L966.5 604.6 L966.8 601.5 L967.0 598.4 L967.0 595.2 L966.9 592.0 L966.7 588.9 L966.4 585.7 L966.0 582.5 L965.4 579.3 L964.8 576.1 L964.1 572.9 L963.2 569.8 L962.3 566.6 L961.3 563.5 L960.3 560.4 L959.1 557.3 L957.9 554.2 L956.6 551.2 L955.2 548.2 L953.8 545.3 L952.4 542.3 L950.8 539.5 L949.3 536.7 L947.7 533.9 L946.0 531.2 L944.3 528.6 L942.6 526.0 L937.0 514.3 L931.0 502.7 L924.7 491.3 L918.2 480.1 L911.4 469.1 L904.3 458.2 L896.9 447.6 L889.3 437.1 L881.4 426.7 L873.3 416.6 L865.0 406.6 L856.4 396.8 L847.7 387.1 L838.8 377.7 L829.7 368.4 L820.4 359.3 L810.9 350.3 L801.3 341.6 L791.6 333.0 L781.6 324.6 L771.6 316.4 L761.4 308.4 L751.0 300.5 L740.5 292.9 L729.9 285.5 L719.1 278.2 L708.2 271.2 L697.2 264.3 L686.1 257.7 L674.8 251.2 L663.5 244.9 L652.0 238.7 L640.5 232.7 L628.8 226.9 L617.1 221.2 L605.3 215.7 L593.5 210.3 L581.6 205.0 L569.6 199.8 L567.5 199.3 L565.0 198.7 L562.5 198.1 L560.0 197.8 L557.6 198.1 L555.6 199.1 L554.0 201.0Z" fill="url(#band)"/><g clip-path="url(#silc)"><ellipse cx="455" cy="540" rx="50" ry="210" transform="rotate(22 455 540)" fill="#02343e" opacity="0.75" filter="url(#bl35)"/><ellipse cx="480" cy="400" rx="40" ry="70" transform="rotate(30 480 400)" fill="#022c36" opacity="0.6" filter="url(#bl20)"/><ellipse cx="400" cy="720" rx="28" ry="60" fill="#02343e" opacity="0.5" filter="url(#bl20)"/><ellipse cx="590" cy="320" rx="40" ry="18" transform="rotate(20 590 320)" fill="#04505c" opacity="0.4" filter="url(#bl20)"/><ellipse cx="680" cy="390" rx="70" ry="25" transform="rotate(30 680 390)" fill="#087e8a" opacity="0.5" filter="url(#bl20)"/><ellipse cx="745" cy="430" rx="70" ry="30" transform="rotate(33 745 430)" fill="#077884" opacity="0.6" filter="url(#bl20)"/><ellipse cx="865" cy="565" rx="28" ry="90" transform="rotate(-40 865 565)" fill="#034650" opacity="0.6" filter="url(#bl20)"/><ellipse cx="710" cy="745" rx="150" ry="50" transform="rotate(-18 710 745)" fill="#00ccdc" opacity="0.75" filter="url(#bl35)"/></g><path d="M577.5 380.0 L572.9 385.8 L568.5 391.6 L564.1 397.5 L559.7 403.5 L555.5 409.6 L551.4 415.7 L547.3 421.9 L543.3 428.2 L539.5 434.5 L535.7 440.9 L532.0 447.4 L528.4 453.9 L524.9 460.4 L521.5 467.1 L518.2 473.7 L515.0 480.5 L511.9 487.2 L509.0 494.1 L506.1 500.9 L503.4 507.8 L500.7 514.8 L498.2 521.8 L495.8 528.8 L493.5 535.9 L491.4 543.0 L489.4 550.1 L487.5 557.3 L485.7 564.5 L484.0 571.7 L482.5 578.9 L481.1 586.2 L479.9 593.5 L478.8 600.8 L477.8 608.1 L477.0 615.5 L476.3 622.8 L475.8 630.2 L475.4 637.6 L475.2 645.0 L478.9 683.2 L480.3 693.1 L482.0 703.0 L491.2 705.3 L500.5 707.4 L509.9 709.1 L519.4 710.6 L528.9 711.7 L538.5 712.6 L548.1 713.2 L557.8 713.5 L567.4 713.6 L577.1 713.3 L586.9 712.8 L596.6 712.1 L606.3 711.0 L615.9 709.7 L625.6 708.1 L635.2 706.3 L644.7 704.2 L654.2 701.8 L663.6 699.2 L673.0 696.4 L682.2 693.2 L691.4 689.8 L700.4 686.2 L709.3 682.3 L718.1 678.2 L726.7 673.8 L735.2 669.2 L743.5 664.3 L751.7 659.1 L759.6 653.7 L767.4 648.0 L774.9 642.1 L782.3 635.9 L789.4 629.4 L796.2 622.7 L802.8 615.7 L809.2 608.5 L815.2 601.0 L821.0 593.2 L821.8 584.2 L821.6 575.5 L820.5 567.1 L818.5 558.9 L815.8 550.9 L812.4 543.2 L808.3 535.8 L803.8 528.5 L798.8 521.6 L793.4 514.8 L787.7 508.3 L781.7 502.0 L775.5 496.0 L769.0 490.1 L762.4 484.5 L755.5 479.0 L748.4 473.7 L741.2 468.5 L733.8 463.6 L726.2 458.7 L718.6 454.0 L710.8 449.4 L702.9 445.0 L695.0 440.6 L687.0 436.3 L679.0 432.1 L670.9 428.0 L662.8 423.9 L654.7 419.9 L646.6 415.9 L638.6 412.0 L630.6 408.0 L622.7 404.1 L614.9 400.1 L607.1 396.2 L599.5 392.2 L592.0 388.2 L584.7 384.1 L577.5 380.0Z" fill="url(#cavg)"/><g clip-path="url(#cavc)"><ellipse cx="540" cy="500" rx="50" ry="140" transform="rotate(20 540 500)" fill="#04505c" opacity="0.7" filter="url(#bl35)"/><ellipse cx="800" cy="570" rx="30" ry="50" fill="#04545e" opacity="0.5" filter="url(#bl20)"/></g><path d="M580.7 338.6 L573.3 345.8 L566.3 353.2 L559.5 360.8 L553.0 368.6 L546.7 376.6 L540.8 384.7 L535.1 393.0 L529.7 401.5 L524.6 410.1 L519.7 418.8 L515.1 427.7 L510.8 436.7 L506.7 445.8 L502.8 455.0 L499.3 464.4 L495.9 473.8 L492.9 483.4 L490.0 493.0 L487.4 502.7 L485.1 512.5 L483.0 522.3 L481.1 532.2 L479.4 542.2 L478.0 552.2 L476.8 562.2 L475.8 572.3 L475.0 582.4 L474.5 592.5 L474.2 602.6 L474.0 612.8 L474.1 622.9 L474.4 633.0 L474.9 643.1 L475.6 653.2 L476.5 663.2 L477.6 673.3 L478.9 683.2 L480.3 693.1 L475.2 645.0 L475.4 637.6 L475.8 630.2 L476.3 622.8 L477.0 615.5 L477.8 608.1 L478.8 600.8 L479.9 593.5 L481.1 586.2 L482.5 578.9 L484.0 571.7 L485.7 564.5 L487.5 557.3 L489.4 550.1 L491.4 543.0 L493.5 535.9 L495.8 528.8 L498.2 521.8 L500.7 514.8 L503.4 507.8 L506.1 500.9 L509.0 494.1 L511.9 487.2 L515.0 480.5 L518.2 473.7 L521.5 467.1 L524.9 460.4 L528.4 453.9 L532.0 447.4 L535.7 440.9 L539.5 434.5 L543.3 428.2 L547.3 421.9 L551.4 415.7 L555.5 409.6 L559.7 403.5 L564.1 397.5 L568.5 391.6 L572.9 385.8 L577.5 380.0 L580.7 338.6Z" fill="#0a5a8c" stroke="#081218" stroke-width="1.15" stroke-linejoin="round"/><path d="M485.1 512.5 L483.0 522.3 L481.1 532.2 L479.4 542.2 L478.0 552.2 L476.8 562.2 L475.8 572.3 L475.0 582.4 L474.5 592.5 L474.2 602.6 L474.0 612.8 L474.1 622.9 L474.4 633.0 L474.9 643.1 L475.6 653.2 L476.5 663.2 L477.6 673.3 L478.9 683.2 L480.3 693.1 L482.0 703.0" fill="none" stroke="#081218" stroke-width="1.15" stroke-linejoin="round"/><path d="M554.0 201.0 L541.4 213.4 L529.2 226.1 L517.4 239.1 L506.1 252.5 L495.1 266.2 L484.6 280.2 L474.5 294.5 L464.8 309.0 L455.6 323.9 L446.7 338.9 L438.3 354.3 L430.3 369.8 L422.6 385.6 L415.5 401.6 L408.7 417.7 L402.3 434.1 L396.4 450.6 L390.8 467.3 L385.7 484.2 L381.0 501.1 L376.7 518.2 L372.8 535.4 L369.4 552.7 L366.4 570.1 L363.8 587.5 L361.7 605.0 L360.1 622.6 L358.9 640.1 L358.2 657.7 L358.0 675.2 L358.3 692.8 L359.1 710.3 L360.4 727.7 L362.3 745.1 L364.7 762.4 L367.6 779.6 L371.3 796.7 L375.6 813.5 L380.8 830.2 L379.4 815.5 L378.3 800.8 L377.5 786.0 L377.0 771.2 L376.9 756.4 L377.0 741.5 L377.5 726.6 L378.2 711.8 L379.3 696.9 L380.6 682.0 L382.3 667.2 L384.3 652.4 L386.5 637.6 L389.1 622.8 L392.0 608.2 L395.2 593.5 L398.6 579.0 L402.4 564.5 L406.5 550.1 L410.9 535.8 L415.5 521.6 L420.5 507.5 L425.8 493.5 L431.3 479.7 L437.2 466.0 L443.3 452.4 L449.8 439.0 L456.5 425.7 L463.5 412.6 L470.8 399.7 L478.5 386.9 L486.4 374.4 L494.5 362.0 L503.0 349.8 L511.8 337.9 L520.9 326.2 L530.2 314.7 L539.9 303.5 L549.8 292.5 L549.2 284.2 L548.8 275.8 L548.5 267.5 L548.4 259.1 L548.5 250.8 L548.7 242.4 L549.3 234.1 L550.0 225.8 L551.0 217.5 L552.4 209.2 L554.0 201.0Z" fill="url(#greeng)" stroke="#081218" stroke-width="1.15" stroke-linejoin="round"/><path d="M554.0 201.0 L555.6 199.1 L557.6 198.1 L560.0 197.8 L562.5 198.1 L565.0 198.7 L567.5 199.3 L569.6 199.8 L575.4 205.5 L580.8 211.4 L585.8 217.6 L590.6 224.0 L595.0 230.7 L599.2 237.5 L603.1 244.5 L606.9 251.6 L610.4 258.8 L613.8 266.2 L617.0 273.6 L620.2 281.0 L623.2 288.5 L626.2 296.0 L629.2 303.5 L632.2 311.0 L635.2 318.4 L638.3 325.8 L641.4 333.0 L633.5 328.4 L625.5 324.0 L617.4 319.8 L609.2 315.8 L600.9 311.9 L592.6 308.2 L584.2 304.7 L575.7 301.4 L567.2 298.2 L558.5 295.3 L549.8 292.5 L549.2 284.2 L548.8 275.8 L548.5 267.5 L548.4 259.1 L548.5 250.8 L548.7 242.4 L549.3 234.1 L550.0 225.8 L551.0 217.5 L552.4 209.2 L554.0 201.0Z" fill="url(#facetg)" stroke="#081218" stroke-width="1.15" stroke-linejoin="round"/><path d="M569.6 199.8 L575.4 205.5 L580.8 211.4 L585.8 217.6 L590.6 224.0 L595.0 230.7 L599.2 237.5 L603.1 244.5 L606.9 251.6 L610.4 258.8 L613.8 266.2 L617.0 273.6 L620.2 281.0 L623.2 288.5 L626.2 296.0 L629.2 303.5 L632.2 311.0 L635.2 318.4 L638.3 325.8 L641.4 333.0 L649.8 336.8 L658.1 340.6 L666.5 344.4 L674.9 348.2 L683.3 352.1 L691.7 356.0 L700.1 359.9 L708.5 363.9 L716.8 367.9 L725.2 371.9 L733.5 376.0 L741.8 380.2 L750.1 384.4 L758.3 388.7 L766.5 393.0 L774.7 397.4 L782.8 401.9 L790.9 406.5 L798.9 411.1 L806.8 415.8 L814.7 420.6 L822.6 425.5 L830.4 430.5 L838.1 435.6 L845.7 440.8 L853.3 446.1 L860.7 451.5 L868.1 457.0 L875.4 462.6 L882.6 468.4 L889.7 474.2 L896.7 480.2 L903.6 486.3 L910.4 492.6 L917.1 499.0 L923.7 505.5 L930.1 512.2 L936.4 519.0 L942.6 526.0 L937.0 514.3 L931.0 502.7 L924.7 491.3 L918.2 480.1 L911.4 469.1 L904.3 458.2 L896.9 447.6 L889.3 437.1 L881.4 426.7 L873.3 416.6 L865.0 406.6 L856.4 396.8 L847.7 387.1 L838.8 377.7 L829.7 368.4 L820.4 359.3 L810.9 350.3 L801.3 341.6 L791.6 333.0 L781.6 324.6 L771.6 316.4 L761.4 308.4 L751.0 300.5 L740.5 292.9 L729.9 285.5 L719.1 278.2 L708.2 271.2 L697.2 264.3 L686.1 257.7 L674.8 251.2 L663.5 244.9 L652.0 238.7 L640.5 232.7 L628.8 226.9 L617.1 221.2 L605.3 215.7 L593.5 210.3 L581.6 205.0 L569.6 199.8Z" fill="url(#lightg)"/><g clip-path="url(#lightc)"><path d="M942.6 526.0 L937.0 514.3 L931.0 502.7 L924.7 491.3 L918.2 480.1 L911.4 469.1 L904.3 458.2 L896.9 447.6 L889.3 437.1 L881.4 426.7 L873.3 416.6 L865.0 406.6 L856.4 396.8 L847.7 387.1 L838.8 377.7 L829.7 368.4 L820.4 359.3 L810.9 350.3 L801.3 341.6 L791.6 333.0 L781.6 324.6 L771.6 316.4 L761.4 308.4 L751.0 300.5 L740.5 292.9 L729.9 285.5 L719.1 278.2 L708.2 271.2 L697.2 264.3 L686.1 257.7 L674.8 251.2 L663.5 244.9 L652.0 238.7 L640.5 232.7 L628.8 226.9 L617.1 221.2 L605.3 215.7 L593.5 210.3 L581.6 205.0 L569.6 199.8" fill="none" stroke="#17808e" stroke-width="16" opacity="0.55" filter="url(#bl8)"/></g><path d="M569.6 199.8 L575.4 205.5 L580.8 211.4 L585.8 217.6 L590.6 224.0 L595.0 230.7 L599.2 237.5 L603.1 244.5 L606.9 251.6 L610.4 258.8 L613.8 266.2 L617.0 273.6 L620.2 281.0 L623.2 288.5 L626.2 296.0 L629.2 303.5 L632.2 311.0 L635.2 318.4 L638.3 325.8 L641.4 333.0 L649.8 336.8 L658.1 340.6 L666.5 344.4 L674.9 348.2 L683.3 352.1 L691.7 356.0 L700.1 359.9 L708.5 363.9 L716.8 367.9 L725.2 371.9 L733.5 376.0 L741.8 380.2 L750.1 384.4 L758.3 388.7 L766.5 393.0 L774.7 397.4 L782.8 401.9 L790.9 406.5 L798.9 411.1 L806.8 415.8 L814.7 420.6 L822.6 425.5 L830.4 430.5 L838.1 435.6 L845.7 440.8 L853.3 446.1 L860.7 451.5 L868.1 457.0 L875.4 462.6 L882.6 468.4 L889.7 474.2 L896.7 480.2 L903.6 486.3 L910.4 492.6 L917.1 499.0 L923.7 505.5 L930.1 512.2 L936.4 519.0 L942.6 526.0 L937.0 514.3 L931.0 502.7 L924.7 491.3 L918.2 480.1 L911.4 469.1 L904.3 458.2 L896.9 447.6 L889.3 437.1 L881.4 426.7 L873.3 416.6 L865.0 406.6 L856.4 396.8 L847.7 387.1 L838.8 377.7 L829.7 368.4 L820.4 359.3 L810.9 350.3 L801.3 341.6 L791.6 333.0 L781.6 324.6 L771.6 316.4 L761.4 308.4 L751.0 300.5 L740.5 292.9 L729.9 285.5 L719.1 278.2 L708.2 271.2 L697.2 264.3 L686.1 257.7 L674.8 251.2 L663.5 244.9 L652.0 238.7 L640.5 232.7 L628.8 226.9 L617.1 221.2 L605.3 215.7 L593.5 210.3 L581.6 205.0 L569.6 199.8Z" fill="none" stroke="#081218" stroke-width="1.15" stroke-linejoin="round"/><path d="M641.4 333.0 L649.8 336.8 L658.1 340.6 L666.5 344.4 L674.9 348.2 L683.3 352.1 L691.7 356.0 L700.1 359.9 L708.5 363.9 L716.8 367.9 L725.2 371.9 L733.5 376.0 L741.8 380.2 L750.1 384.4 L758.3 388.7 L766.5 393.0 L774.7 397.4 L782.8 401.9 L790.9 406.5 L798.9 411.1 L806.8 415.8 L814.7 420.6 L822.6 425.5 L830.4 430.5 L838.1 435.6 L845.7 440.8 L853.3 446.1 L860.7 451.5 L868.1 457.0 L875.4 462.6 L882.6 468.4 L889.7 474.2 L896.7 480.2 L903.6 486.3 L910.4 492.6 L917.1 499.0 L923.7 505.5 L930.1 512.2 L936.4 519.0 L942.6 526.0 L944.3 528.6 L946.0 531.2 L947.7 533.9 L949.3 536.7 L950.8 539.5 L952.4 542.3 L953.8 545.3 L955.2 548.2 L956.6 551.2 L957.9 554.2 L959.1 557.3 L960.3 560.4 L961.3 563.5 L962.3 566.6 L963.2 569.8 L964.1 572.9 L964.8 576.1 L965.4 579.3 L966.0 582.5 L966.4 585.7 L966.7 588.9 L966.9 592.0 L967.0 595.2 L967.0 598.4 L966.8 601.5 L966.5 604.6 L966.1 607.7 L965.6 610.8 L964.9 613.8 L964.0 616.9 L963.0 619.8 L961.9 622.7 L960.6 625.6 L959.1 628.5 L957.5 631.3 L955.7 634.0 L953.7 636.7 L951.5 639.3 L949.2 641.8 L943.4 632.1 L937.5 622.5 L931.4 612.9 L925.2 603.5 L918.9 594.1 L912.4 584.8 L905.9 575.6 L899.2 566.6 L892.4 557.6 L885.4 548.6 L878.4 539.8 L871.2 531.1 L864.0 522.5 L856.6 514.0 L849.1 505.5 L841.5 497.2 L833.8 488.9 L826.0 480.8 L818.1 472.7 L810.1 464.8 L802.0 456.9 L793.8 449.2 L785.5 441.5 L777.2 434.0 L768.7 426.5 L760.1 419.2 L751.5 411.9 L742.7 404.8 L733.9 397.7 L725.0 390.8 L716.0 383.9 L706.9 377.2 L697.8 370.6 L688.6 364.0 L679.3 357.6 L669.9 351.3 L660.5 345.1 L651.0 339.0 L641.4 333.0Z" fill="url(#stripg)" stroke="#081218" stroke-width="1.15" stroke-linejoin="round"/></g></svg>
<svg class="a" style="left:0px;top:27px" width="1218" height="123" viewBox="0 27 1218 123"><defs>
<linearGradient id="gdoc" x1="0" y1="0" x2="1" y2="1"><stop offset="0" stop-color="#fdfdfd"/><stop offset="1" stop-color="#d6d6d4"/></linearGradient>
<linearGradient id="gorange" x1="0" y1="0" x2="0" y2="1"><stop offset="0" stop-color="#f6b070"/><stop offset="1" stop-color="#e04a10"/></linearGradient>
<linearGradient id="ggreen" x1="0" y1="0" x2="0" y2="1"><stop offset="0" stop-color="#c8e070"/><stop offset="1" stop-color="#6aa020"/></linearGradient>
<linearGradient id="ggrey" x1="0" y1="0" x2="0" y2="1"><stop offset="0" stop-color="#e8e8e6"/><stop offset="1" stop-color="#9a9a98"/></linearGradient>
<linearGradient id="gblue" x1="0" y1="0" x2="1" y2="1"><stop offset="0" stop-color="#a8c0dc"/><stop offset="1" stop-color="#e8f0f8"/></linearGradient>
<linearGradient id="gmag" x1="0" y1="0" x2="0" y2="1"><stop offset="0" stop-color="#dceaf8"/><stop offset="1" stop-color="#98b4d4"/></linearGradient>
<radialGradient id="gball" cx="0.4" cy="0.35" r="0.7"><stop offset="0" stop-color="#fff"/><stop offset="1" stop-color="#f08090"/></radialGradient>
</defs><path d="M22.5 38.5 H33 L36.5 42 V54.5 H22.5 Z" fill="url(#gdoc)" stroke="#9b9b98" stroke-width="1"/><path d="M33 38.5 V42 H36.5" fill="#e8e8e8" stroke="#9b9b98" stroke-width="0.8"/><path d="M33 47.5 h3 v3 h3 v3 h-3 v3 h-3 v-3 h-3 v-3 h3z" fill="url(#ggreen)" stroke="#6a9c20" stroke-width="0.9"/><path d="M53.5 39.5 H63 L66.5 43 V52.5 H53.5 Z" fill="url(#gdoc)" stroke="#9b9b98" stroke-width="1"/><path d="M63 39.5 V43 H66.5" fill="#e8e8e8" stroke="#9b9b98" stroke-width="0.8"/><path d="M52.5 45.5 H68.5 L68 55.5 H53 Z" fill="url(#gorange)" stroke="#c84010" stroke-width="0.8"/><rect x="53" y="41" width="2" height="1" fill="#f0a030"/><path d="M82 41 Q82 38.5 84 38.5 H96 Q98 38.5 98 41 L99 51 V55 Q99 56 97 56 H83 Q81 56 81 55 V51 Z" fill="url(#ggrey)" stroke="#6a6a68" stroke-width="0.9"/><rect x="82" y="51.5" width="16" height="3" rx="1" fill="#3a3a38"/><path d="M87 38.5 H93 V43 H96.5 L90 49.5 L83.5 43 H87 Z" fill="url(#ggreen)" stroke="#5c9018" stroke-width="0.8"/><rect x="114" y="38.5" width="12" height="8" fill="#f4f4f2" stroke="#8a8a88" stroke-width="0.9"/><path d="M117 41 H123 L120 44z" fill="#9a9a98"/><path d="M112 45.5 H128 Q129 45.5 129 47 V54 Q129 55.5 127 55.5 H113 Q111 55.5 111 54 V47 Q111 45.5 112 45.5Z" fill="url(#ggrey)" stroke="#6a6a68" stroke-width="0.9"/><rect x="114" y="46.5" width="12" height="4" fill="#2e2e2c"/><rect x="126" y="51" width="1.5" height="1" fill="#80c040"/><path d="M155.5 39.0 H166 L169.5 42.5 V55.0 H155.5 Z" fill="url(#gdoc)" stroke="#9b9b98" stroke-width="1"/><path d="M166 39.0 V42.5 H169.5" fill="#e8e8e8" stroke="#9b9b98" stroke-width="0.8"/><path d="M154 45 H160 V42 L166 47 L160 52 V49 H154Z" fill="#5a9ad8" stroke="#2a6ab0" stroke-width="0.7"/><path d="M184.5 39.0 H195 L198.5 42.5 V55.0 H184.5 Z" fill="url(#gdoc)" stroke="#9b9b98" stroke-width="1"/><path d="M195 39.0 V42.5 H198.5" fill="#e8e8e8" stroke="#9b9b98" stroke-width="0.8"/><rect x="187" y="41" width="7" height="2" fill="#d8b0a0"/><path d="M189 45 H195 V42 L201 47 L195 52 V49 H189Z" fill="#e070e0" stroke="#b040b0" stroke-width="0.7"/><path d="M240 54 C243 49 241 44 235 44 H231 V40 L225 46 L231 52 V48 H235 C238 48 239.5 51 238 54 Z" fill="#f08838" stroke="#d05810" stroke-width="0.9"/><path d="M258 54 C255 49 257 44 263 44 H267 V40 L273 46 L267 52 V48 H263 C260 48 258.5 51 260 54 Z" fill="#e4e2dc" stroke="#d4d0c8" stroke-width="0.9"/><rect x="298.5" y="38.5" width="10" height="12" fill="#f4f4f4" stroke="#8a8a88"/><path d="M300 41h6M300 43h6M300 45h6" stroke="#aaa" stroke-width="0.8"/><rect x="303.5" y="43.5" width="10" height="12" fill="#f8f8f8" stroke="#8a8a88"/><path d="M305 46.5h6M305 48.5h6M305 50.5h6M305 52.5h6" stroke="#aaa" stroke-width="0.8"/><path d="M331.5 38 L340 50 M341.5 38 L333 50" stroke="#8a8a8a" stroke-width="1.3"/><circle cx="332.5" cy="52" r="2.8" fill="none" stroke="#d03030" stroke-width="1.8"/><circle cx="340.5" cy="52" r="2.8" fill="none" stroke="#d03030" stroke-width="1.8"/><rect x="357.5" y="40.5" width="11" height="14" rx="1" fill="#c8a070" stroke="#8a6a40"/><rect x="360.5" y="38.5" width="5" height="3" fill="#e0e0e0" stroke="#666" stroke-width="0.7"/><rect x="363.5" y="44.5" width="10" height="11" fill="#f8f8f8" stroke="#8a8a88"/><path d="M365 47.5h6M365 49.5h6M365 51.5h6" stroke="#aaa" stroke-width="0.8"/><circle cx="407" cy="45.5" r="7.2" fill="#e4ecf4" stroke="#1a1a1a" stroke-width="1.6"/><rect x="402.5" y="41.5" width="9" height="7" fill="#fff" stroke="#222" stroke-width="0.9" stroke-dasharray="1.5 1"/><path d="M412 50.5 L415.5 54.0" stroke="#111" stroke-width="2.6" stroke-linecap="round"/><circle cx="437" cy="45.5" r="7.2" fill="#e4ecf4" stroke="#1a1a1a" stroke-width="1.6"/><rect x="432" y="41" width="6" height="5" fill="#f0d060" stroke="#806020" stroke-width="0.7"/><rect x="436" y="44" width="6" height="5" fill="#f0c040" stroke="#806020" stroke-width="0.7"/><path d="M442 50.5 L445.5 54.0" stroke="#111" stroke-width="2.6" stroke-linecap="round"/><circle cx="467" cy="45.5" r="7.2" fill="#e4ecf4" stroke="#1a1a1a" stroke-width="1.6"/><rect x="463.5" y="40.5" width="7" height="9" fill="#fafafa" stroke="#333" stroke-width="0.9"/><path d="M472 50.5 L475.5 54.0" stroke="#111" stroke-width="2.6" stroke-linecap="round"/><rect x="501.5" y="38.5" width="10" height="10" fill="#b8cce4" stroke="#5a6a80"/><rect x="504.5" y="41.5" width="14" height="14" rx="1" fill="url(#gmag)" stroke="#4a5a70" stroke-width="1"/><rect x="531.5" y="38.5" width="10" height="10" fill="#b8cce4" stroke="#5a6a80"/><rect x="534.5" y="41.5" width="14" height="14" rx="1" fill="url(#gmag)" stroke="#4a5a70" stroke-width="1"/><rect x="561.5" y="38.5" width="10" height="10" fill="#b8cce4" stroke="#5a6a80"/><rect x="564.5" y="41.5" width="14" height="14" rx="1" fill="url(#gmag)" stroke="#4a5a70" stroke-width="1"/><rect x="540" y="47" width="6" height="5" fill="#f0c040" stroke="#503010" stroke-width="0.8"/><path d="M541.5 47 V45.5 A1.5 1.5 0 0 1 544.5 45.5 V47" fill="none" stroke="#333" stroke-width="0.9"/><rect x="570" y="47" width="6" height="5" fill="#70c040" stroke="#205010" stroke-width="0.8"/><path d="M571.5 47 V45.5 A1.5 1.5 0 0 1 574.5 45 " fill="none" stroke="#333" stroke-width="0.9"/><rect x="605" y="45" width="10" height="8" fill="#b8cce4" stroke="#4a5a70" stroke-width="0.9"/><circle cx="614" cy="43" r="4.5" fill="#c8dcec" stroke="#4a5a70" stroke-width="0.9"/><rect x="603" y="38" width="2.2" height="2.2" fill="#111"/><rect x="618" y="38" width="2.2" height="2.2" fill="#111"/><rect x="603" y="54" width="2.2" height="2.2" fill="#111"/><rect x="618" y="54" width="2.2" height="2.2" fill="#111"/><rect x="635" y="45" width="10" height="8" fill="#f0c848" stroke="#4a5a70" stroke-width="0.9"/><circle cx="644" cy="43" r="4.5" fill="#c8dcec" stroke="#4a5a70" stroke-width="0.9"/><rect x="633" y="38" width="2.2" height="2.2" fill="#111"/><rect x="648" y="38" width="2.2" height="2.2" fill="#111"/><rect x="633" y="54" width="2.2" height="2.2" fill="#111"/><rect x="648" y="54" width="2.2" height="2.2" fill="#111"/><path d="M675 39 H692 L676 56 Z" fill="#fff"/><path d="M676 56 L692 39 V40 L677 56Z" fill="#000"/><path d="M675 38.5 H693 L689 42 H678 V53 L675 56Z" fill="#111"/><path d="M680 54 L690 42 L693 44 L683 56 Z" fill="#222"/><path d="M690 41 L693 39 L693.5 44z" fill="#f4a800"/><path d="M705.5 39 H722.5 V44 H721 Q720 41 717 41 H716 V53.5 Q716 55 718.5 55 V56 H709.5 V55 Q712 55 712 53.5 V41 H711 Q708 41 707 44 H705.5Z" fill="#111"/><path d="M735 44 L741 40 L752 44 L746 48Z" fill="#fafafa" stroke="#222" stroke-width="0.9"/><path d="M735 48 L741 44 L752 48 L746 52Z" fill="#f0f0f0" stroke="#222" stroke-width="0.9"/><path d="M735 52 L741 48 L752 52 L746 56Z" fill="#e8e8e8" stroke="#222" stroke-width="0.9"/><rect x="765.5" y="38.5" width="17" height="17" fill="#f8f8f6" stroke="#222" stroke-width="1"/><rect x="766" y="39" width="16" height="2.5" fill="#9cc0e8"/><path d="M771 44 L768.5 47.5 L771 51 M777 44 L779.5 47.5 L777 51" stroke="#222" stroke-width="1" fill="none"/><rect x="795" y="38" width="1.4" height="18" fill="#d02020"/><rect x="797.5" y="38.5" width="5" height="4" fill="#b8cce4" stroke="#333" stroke-width="0.8"/><rect x="797.5" y="45" width="15" height="4" fill="#b8cce4" stroke="#333" stroke-width="0.8"/><rect x="797.5" y="51.5" width="11" height="4" fill="#b8cce4" stroke="#333" stroke-width="0.8"/><path d="M839.5 54.5 L846.5 46.5" stroke="#888" stroke-width="2.6" stroke-linecap="round"/><path d="M839.5 54.5 L846.5 46.5" stroke="#f4f4f4" stroke-width="1.2" stroke-linecap="round"/><circle cx="842" cy="42.5" r="3.2" fill="#f0f0f0" stroke="#999" stroke-width="0.9"/><path d="M839.5 39.5 L842 42.5 L844.5 39.5" fill="#efebe5" stroke="none"/><path d="M853.5 39.5 L846.5 46.5" stroke="#c87010" stroke-width="2.8" stroke-linecap="round"/><path d="M853 40 L847 46" stroke="#f8c040" stroke-width="1.2"/><path d="M845.5 46.5 L852 53.5" stroke="#a01818" stroke-width="3.2" stroke-linecap="round"/><path d="M846 46 L851.5 52" stroke="#e04040" stroke-width="1.4"/><rect x="843" y="44" width="3" height="2.5" fill="#b02020" transform="rotate(45 844.5 45.2)"/><g transform="translate(876 47)"><path d="M-1.6 -8.5 H1.6 L2 -6.2 L4.3 -5.2 L6.2 -6.6 L8.4 -4.3 L7 -2.4 L7.9 -0.2 V0.2 L7 2.4 L8.4 4.3 L6.2 6.6 L4.3 5.2 L2 6.2 L1.6 8.5 H-1.6 L-2 6.2 L-4.3 5.2 L-6.2 6.6 L-8.4 4.3 L-7 2.4 L-7.9 0.2 V-0.2 L-7 -2.4 L-8.4 -4.3 L-6.2 -6.6 L-4.3 -5.2 L-2 -6.2Z" fill="#e4e2de" stroke="#a8a6a2" stroke-width="0.8"/><circle r="4.6" fill="none" stroke="#c8c6c2" stroke-width="0.8"/><circle r="2.4" fill="#efebe5" stroke="#a8a6a2" stroke-width="0.9"/></g><path d="M27 85 L33.5 91" stroke="#000" stroke-width="1.5"/><path d="M35 92.5 L30.5 91.5 L34 88z" fill="#000"/><path d="M25 78.5 L28.5 82 L25 85.5 L21.5 82z" fill="#a8a0e0" stroke="#1020f0" stroke-width="1.2"/><path d="M36 89.5 L39.5 93 L36 96.5 L32.5 93z" fill="#a8a0e0" stroke="#109010" stroke-width="1.2"/><path d="M67 84 V95" stroke="#111" stroke-width="1.3" stroke-dasharray="1.7 1.3"/><path d="M70 80.5 H81" stroke="#111" stroke-width="1.3" stroke-dasharray="1.7 1.3"/><path d="M66.5 77.5 L69.5 80.5 L66.5 83.5 L63.5 80.5z" fill="#888" stroke="#1020f0" stroke-width="1.2"/><path d="M94 93.5 H108.5 V79" fill="none" stroke="#bdb7ac" stroke-width="1" stroke-dasharray="2 1.5"/><path d="M123 93.5 H135 M137.5 91 V79" fill="none" stroke="#bdb7ac" stroke-width="1" stroke-dasharray="2 1.5"/><circle cx="137.5" cy="93.5" r="2" fill="none" stroke="#bdb7ac"/><path d="M153 92 H167 V86 M167 81 V79" fill="none" stroke="#bdb7ac" stroke-width="1" stroke-dasharray="2 1.5"/><ellipse cx="167" cy="83" rx="1.4" ry="2" fill="#bdb7ac"/><path d="M184 92 H197.5 V79" fill="none" stroke="#bdb7ac" stroke-width="1" stroke-dasharray="2 1.5"/><circle cx="187.8" cy="83" r="1.8" fill="none" stroke="#bdb7ac"/><path d="M226.5 88 C228 83 232 82 234 85 C233 90 236 94 243 95" fill="none" stroke="#555" stroke-width="1.2"/><path d="M234.5 79.5 L237.5 82.5 L234.5 85.5 L231.5 82.5z" fill="#a8a0e0" stroke="#1020f0" stroke-width="1.1"/><path d="M256 80 C262 81 267 85 266 90 C265 94 263 95 268 94 C270 93 272 91 272 88" fill="none" stroke="#109010" stroke-width="1.6"/><path d="M286 95 L303 81 M287 83 L302 93" stroke="#c8c4bc" stroke-width="1"/><circle cx="294" cy="88" r="1.8" fill="#c8c4bc"/><path d="M315 78 C322 79 326 84 326 88 M323 91 C326 91 330 89 331 86" fill="none" stroke="#555" stroke-width="1.2"/><path d="M323 89 L326 92 L323 95 L320 92z" fill="#a8a0e0" stroke="#109010" stroke-width="1.2"/><path d="M345 78 C348 78 352 80 353 82 M355 85 C356 90 353 93 351 95 C356 95 360 93 360 88" fill="none" stroke="#555" stroke-width="1.2"/><rect x="351" y="80" width="4" height="4" fill="#a8a0e0" stroke="#109010" stroke-width="1.1"/><path d="M375 96 L392 79" stroke="#555" stroke-width="1"/><path d="M376 92 L379 96 M378 90 L381 94 M386 82 L389 86 M388 80 L391 84" stroke="#d02020" stroke-width="1.3"/><circle cx="383.5" cy="87.5" r="2" fill="#a8a0e0" stroke="#109010" stroke-width="1"/><path d="M405 95 H419 V80" fill="none" stroke="#666" stroke-width="1.2"/><circle cx="411" cy="85.5" r="1.7" fill="none" stroke="#109010" stroke-width="1.1"/><path d="M435 95 H450 V80" fill="none" stroke="#222" stroke-width="1.1" stroke-dasharray="1.5 1"/><path d="M437 85.5 H444 M440.5 82 V89" stroke="#222" stroke-width="1.3"/><rect x="480.5" y="79.5" width="9" height="15" fill="url(#gdoc)" stroke="#222" stroke-width="1"/><path d="M510.5 79 V97 M514.5 79 V97 M518.5 79 V97 M522.5 79 V97 M508 81.5 H525 M508 85.5 H525 M508 89.5 H525 M508 93.5 H525" stroke="#1010e0" stroke-width="1.1"/><path d="M540 79 V97 M553 79 V97" stroke="#1010e0" stroke-width="1.2"/><path d="M544 96 L549 80" stroke="#1010e0" stroke-width="1.2"/><g transform="translate(0 2)"><path d="M22.5 119.5 H32 L35.5 123 V134.5 H22.5 Z" fill="#ddd8d0" stroke="#9b9b98" stroke-width="1"/><path d="M32 119.5 V123 H35.5" fill="#e8e8e8" stroke="#9b9b98" stroke-width="0.8"/><path d="M24 123h7M24 125.5h9M24 128h9M24 130.5h9M24 133h7" stroke="#c0a090" stroke-width="1.2"/><rect x="52.5" y="119.5" width="15" height="16" fill="none" stroke="#111" stroke-width="1.1" stroke-dasharray="2 1"/><path d="M55 124 L59 122 L66 124 L62 126Z M55 127 L59 125 L66 127 L62 129Z M55 130 L59 128 L66 130 L62 132Z" fill="#fafafa" stroke="#222" stroke-width="0.8"/><rect x="82.5" y="119.5" width="15" height="16" fill="none" stroke="#cfc8bc" stroke-width="0.9" stroke-dasharray="1.5 1"/><rect x="84.5" y="126.5" width="8" height="7" fill="#e4e0d8" stroke="#cfc8bc" stroke-width="0.8"/><circle cx="91" cy="124" r="4" fill="#e8e4de" stroke="#cfc8bc" stroke-width="0.8"/><path d="M134 123 A6 6 0 1 1 128 128" fill="none" stroke="#d0cbc2" stroke-width="3"/><path d="M130 119 L135 123 L130 126z" fill="#d0cbc2"/><path d="M158 123 A6 6 0 1 0 164 128" fill="none" stroke="#d0cbc2" stroke-width="3"/><path d="M162 119 L157 123 L162 126z" fill="#d0cbc2"/><path d="M183 128 L187 124 V126.5 H197 V124 L201 128 L197 132 V129.5 H187 V132Z" fill="#d0cbc2"/><path d="M223 118 L227 122 H224.5 V132 H227 L223 136 L219 132 H221.5 V122 H219Z" fill="#d0cbc2"/><path d="M257 119 V130 M255 127 L257 131 L259 127" stroke="#c8c2b8" stroke-width="1.4" fill="none"/><path d="M262 120h7M262 123h7M262 126h7M262 129h7" stroke="#c8c2b8" stroke-width="2"/><rect x="256" y="133" width="14" height="2.5" fill="#c8c2b8"/><path d="M290 120h10M293 123h7M286 127h14M286 131h14M290 134h10" stroke="#c8c2b8" stroke-width="2"/><path d="M290 124 L286 126 L290 128" stroke="#c8c2b8" stroke-width="1.2" fill="none"/><path d="M316 120h13M316 123h9M316 127h7M316 131h7M316 134h7" stroke="#c8c2b8" stroke-width="2"/><path d="M328 127 L326 125 L324 127 M326 125 V133" stroke="#c8c2b8" stroke-width="1.2" fill="none"/><rect x="346" y="118.5" width="14" height="2.5" fill="#c8c2b8"/><path d="M347 124h7M347 127h7M347 130h7M347 133h7" stroke="#c8c2b8" stroke-width="2"/><path d="M359 136 V122 M357 124 L359 121 L361 124" stroke="#c8c2b8" stroke-width="1.4" fill="none"/></g><path d="M942 124 H953 V130 M942 127 H950.5 V130 M942 130 H948" stroke="#111" stroke-width="1.3" fill="none"/><path d="M943 133.5 h9" stroke="#111" stroke-width="1" stroke-dasharray="1.5 1"/><path d="M951 131.5 L954 133.5 L951 135.5z" fill="#111"/><path d="M972 124 C978 123.5 983 125 983 130 M972 127 C977 126.5 980 128 980 130 M972 130 h5" stroke="#111" stroke-width="1.3" fill="none"/><path d="M973 133.5 h9" stroke="#111" stroke-width="1" stroke-dasharray="1.5 1"/><path d="M981 131.5 L984 133.5 L981 135.5z" fill="#111"/><rect x="1002" y="126.5" width="9" height="4" fill="#a8c4e4"/><path d="M1002 124 H1013 V130 M1002 126.5 H1011 V130" stroke="#111" stroke-width="1.3" fill="none"/><path d="M1003 133.5 h9" stroke="#111" stroke-width="1" stroke-dasharray="1.5 1"/><path d="M1011 131.5 L1014 133.5 L1011 135.5z" fill="#111"/><path d="M1032 124 h12 M1032 129.5 h12" stroke="#111" stroke-width="1.2" stroke-dasharray="2 1"/><path d="M1033.5 126.8 h2 M1037.5 126.8 h2 M1041.5 126.8 h2" stroke="#111" stroke-width="2.4"/><path d="M1033 133.5 h9" stroke="#111" stroke-width="1" stroke-dasharray="1.5 1"/><path d="M1041 131.5 L1044 133.5 L1041 135.5z" fill="#111"/></g><rect x="689.5" y="128.5" width="9" height="6.5" rx="1" fill="#f0d040" stroke="#222" stroke-width="1"/><path d="M691.5 128.5 V126 A3 3 0 0 1 697 124.5" fill="none" stroke="#222" stroke-width="1.2"/><circle cx="694" cy="132" r="0.9" fill="#222"/><path d="M847 125 H855 L851 133Z" fill="#5e564c"/></svg>
<div class="t" id="t16" style="left:390px;top:124px;font-size:12.5px;color:#b8a890;font-weight:normal;transform:scaleX(1.1985);transform-origin:0 0;-webkit-text-stroke:0.3px #b8a890;">X</div>
<div class="a" style="left:405px;top:119px;width:66px;height:20px;border:1px solid #e3dbcf;border-radius:2px;background:#efebe5"></div>
<div class="a" style="left:471px;top:119px;width:10px;height:20px;border:1px solid #d8ccb8;border-radius:3px;background:linear-gradient(90deg,#f6f3ee,#ebe5dc)"></div>
<svg class="a" style="left:472px;top:121px" width="8" height="16" viewBox="0 0 8 16"><path d="M1.5 6 L4 2 L6.5 6z M1.5 10 L4 14 L6.5 10z" fill="#cbbfa9"/></svg>
<div class="a" style="left:406px;top:120px;width:64px;height:18px;overflow:hidden">
<div class="t" id="t17" style="left:2px;top:3px;font-size:12.5px;color:#b4a48a;font-weight:normal;transform:scaleX(1.2975);transform-origin:0 0;-webkit-text-stroke:0.3px #b4a48a;">-0,000</div>
</div>
<div class="t" id="t18" style="left:489px;top:124px;font-size:12.5px;color:#b8a890;font-weight:normal;transform:scaleX(1.1985);transform-origin:0 0;-webkit-text-stroke:0.3px #b8a890;">Y</div>
<div class="a" style="left:504px;top:119px;width:66px;height:20px;border:1px solid #e3dbcf;border-radius:2px;background:#efebe5"></div>
<div class="a" style="left:570px;top:119px;width:10px;height:20px;border:1px solid #d8ccb8;border-radius:3px;background:linear-gradient(90deg,#f6f3ee,#ebe5dc)"></div>
<svg class="a" style="left:571px;top:121px" width="8" height="16" viewBox="0 0 8 16"><path d="M1.5 6 L4 2 L6.5 6z M1.5 10 L4 14 L6.5 10z" fill="#cbbfa9"/></svg>
<div class="a" style="left:505px;top:120px;width:64px;height:18px;overflow:hidden">
<div class="t" id="t19" style="left:2px;top:3px;font-size:12.5px;color:#b4a48a;font-weight:normal;transform:scaleX(1.2975);transform-origin:0 0;-webkit-text-stroke:0.3px #b4a48a;">-0,000</div>
</div>
<div class="t" id="t20" style="left:589px;top:121px;font-size:12.5px;color:#b8a890;font-weight:normal;transform:scaleX(1.1985);transform-origin:0 0;-webkit-text-stroke:0.3px #b8a890;">Š</div>
<div class="a" style="left:603px;top:119px;width:66px;height:20px;border:1px solid #e3dbcf;border-radius:2px;background:#efebe5"></div>
<div class="a" style="left:669px;top:119px;width:10px;height:20px;border:1px solid #d8ccb8;border-radius:3px;background:linear-gradient(90deg,#f6f3ee,#ebe5dc)"></div>
<svg class="a" style="left:670px;top:121px" width="8" height="16" viewBox="0 0 8 16"><path d="M1.5 6 L4 2 L6.5 6z M1.5 10 L4 14 L6.5 10z" fill="#cbbfa9"/></svg>
<div class="a" style="left:604px;top:120px;width:64px;height:18px;overflow:hidden">
<div class="t" id="t21" style="left:2px;top:3px;font-size:12.5px;color:#b4a48a;font-weight:normal;transform:scaleX(1.2466);transform-origin:0 0;-webkit-text-stroke:0.3px #b4a48a;">1280,000</div>
</div>
<div class="t" id="t22" style="left:718px;top:124px;font-size:12.5px;color:#b8a890;font-weight:normal;transform:scaleX(1.1985);transform-origin:0 0;-webkit-text-stroke:0.3px #b8a890;">V</div>
<div class="a" style="left:733px;top:119px;width:66px;height:20px;border:1px solid #e3dbcf;border-radius:2px;background:#efebe5"></div>
<div class="a" style="left:799px;top:119px;width:10px;height:20px;border:1px solid #d8ccb8;border-radius:3px;background:linear-gradient(90deg,#f6f3ee,#ebe5dc)"></div>
<svg class="a" style="left:800px;top:121px" width="8" height="16" viewBox="0 0 8 16"><path d="M1.5 6 L4 2 L6.5 6z M1.5 10 L4 14 L6.5 10z" fill="#cbbfa9"/></svg>
<div class="a" style="left:734px;top:120px;width:64px;height:18px;overflow:hidden">
<div class="t" id="t23" style="left:2px;top:3px;font-size:12.5px;color:#b4a48a;font-weight:normal;transform:scaleX(1.2466);transform-origin:0 0;-webkit-text-stroke:0.3px #b4a48a;">1024,000</div>
</div>
<div class="t" id="t24" style="left:816px;top:123px;font-size:13px;color:#2e2a3a;font-weight:bold;transform:scaleX(1.0546);transform-origin:0 0;">px</div>
<div class="t" id="t25" style="left:886px;top:123px;font-size:12.5px;color:#363646;font-weight:bold;transform:scaleX(1.0446);transform-origin:0 0;">Afekt:</div>
<svg class="a" style="left:0px;top:160px" width="40" height="590" viewBox="0 160 40 590"><defs>
<linearGradient id="tbgrey" x1="0" y1="0" x2="0" y2="1"><stop offset="0" stop-color="#fff"/><stop offset="1" stop-color="#888"/></linearGradient>
<linearGradient id="tbblue" x1="0" y1="0" x2="1" y2="1"><stop offset="0" stop-color="#f0f4fa"/><stop offset="1" stop-color="#88a8cc"/></linearGradient>
<radialGradient id="tbglass" cx="0.4" cy="0.4" r="0.6"><stop offset="0" stop-color="#fff"/><stop offset="1" stop-color="#a8c4e0"/></radialGradient>
<radialGradient id="tbpink" cx="0.45" cy="0.3" r="0.7"><stop offset="0" stop-color="#fff"/><stop offset="1" stop-color="#f890a0"/></radialGradient>
<linearGradient id="tbgreen" x1="0" y1="0" x2="1" y2="1"><stop offset="0" stop-color="#30a040"/><stop offset="1" stop-color="#c0e8c0"/></linearGradient>
</defs><path d="M15 174 V191 L19 187 L22.5 194 L25.5 192.5 L22 186 L27 185.5 Z" fill="#000" stroke="#fff" stroke-width="1"/><path d="M11 222 C11 214 16 208 24 207" fill="none" stroke="#888" stroke-width="1.2"/><rect x="12" y="204" width="5" height="5" fill="#8080ff" stroke="#1010e0" stroke-width="1.3"/><rect x="24.5" y="203.5" width="4" height="4" fill="none" stroke="#6060f0" stroke-width="1"/><rect x="8.5" y="219.5" width="4" height="4" fill="none" stroke="#6060f0" stroke-width="1"/><path d="M17 209 L30 214 L25 219 Z" fill="#000"/><path d="M10 248 C12 240 16 237 21 237 C26 237 28 241 26 244 C24 246 21 245 22 242 C17 244 19 251 27 250 L31 250 V256 H10Z" fill="url(#tbgrey)" stroke="#555" stroke-width="0.8"/><circle cx="17" cy="274.5" r="7.5" fill="url(#tbglass)" stroke="#222" stroke-width="1.5"/><path d="M22.5 280 L28.5 286" stroke="#c07808" stroke-width="4.4" stroke-linecap="round"/><path d="M22.5 280 L28.5 286" stroke="#f8c040" stroke-width="2.4" stroke-linecap="round"/><rect x="11.5" y="300.5" width="18" height="18" fill="url(#tbblue)" stroke="#111" stroke-width="1.3"/><path d="M19 331.5 L29.5 336 L30.5 347.5 L22 353.5 L11.5 349 L11 336.5Z" fill="#7070b8" stroke="#333" stroke-width="1"/><path d="M14 338 L20 335 L28 338.5 L28.5 347 L22 350 L13.5 346.5Z" fill="#d8d8f0"/><path d="M13.5 346.5 L20 343 L28.5 347 L22 350Z" fill="#383890"/><path d="M20 335 V343" stroke="#a0a0d0" stroke-width="0.8"/><circle cx="21" cy="374" r="9" fill="url(#tbpink)" stroke="#222" stroke-width="1.2"/><path d="M12 400 L17 396 L22 399 L21 405 L15 407Z" fill="#f0e890" stroke="#333" stroke-width="1"/><path d="M24 400 L26 405 L31 405.5 L27 409 L28.5 414 L24 411 L19.5 414 L21 409 L17 405.5 L22 405Z" fill="#f0e060" stroke="#333" stroke-width="1"/><path d="M21 440 C21 438 18 437.5 17.5 440 C17 443.5 22 445 24.5 442 C28 438 25 432 19.5 432 C13 432 10.5 439 12 444 C14 450 22 452 27 448.5 C31 445.5 32 439 30 434" fill="none" stroke="#111" stroke-width="1.5"/><path d="M13 466 C10 470 16 472 13 476 C11 479 15 481 19 478" fill="none" stroke="#222" stroke-width="1"/><path d="M19 478 L17 472 L26 461 L30 465 L21 476Z" fill="#f0c030" stroke="#333" stroke-width="0.9"/><path d="M17 472 L19 478 L21 476Z" fill="#f8e0a0"/><path d="M11 494 H16 C19 498 17 504 12 508" fill="none" stroke="#222" stroke-width="1"/><rect x="10" y="506" width="3.5" height="3.5" fill="#fff" stroke="#222" stroke-width="0.8"/><path d="M13 508 H20" stroke="#222" stroke-width="1"/><path d="M20 508 L22 501 L28 494 L31 497 L25 504Z" fill="#80b0e0" stroke="#333" stroke-width="0.9"/><path d="M20 508 L22 501 L25 504Z" fill="#f0c040"/><path d="M13 524 C8 530 10 540 18 543 C22 544 27 542 30 540 C24 541 19 540 17 534 C16 530 17 526 19 524Z" fill="#111"/><path d="M18 538 L21 530 L28 524 L31 527 L25 535Z" fill="#f0c040" stroke="#333" stroke-width="0.9"/><path d="M26 523 L29 520 L32 523 L29 526Z" fill="#d02020"/><path d="M11 572 L22 556 L31 562 L20 577Z" fill="#f4c8c0" stroke="#333" stroke-width="1"/><path d="M14 590 L24 585 L30 595 L20 600Z" fill="#80b4e0" stroke="#333" stroke-width="0.9"/><path d="M14 590 C12 596 14 600 16 602 L18 600" fill="none" stroke="#30a040" stroke-width="2"/><ellipse cx="20" cy="606" rx="9" ry="2.5" fill="#60c060" stroke="#208030" stroke-width="0.8"/><path d="M11 638 L18 619 H23 L30 638 H25.5 L24 633.5 H17 L15.5 638Z M18.2 629.5 H22.8 L20.5 622.5Z" fill="#111"/><path d="M29 619 V638 M27 619 H31 M27 638 H31" stroke="#222" stroke-width="0.8" stroke-dasharray="1 1"/><rect x="16.5" y="652.5" width="7" height="5" fill="#9cc0e8" stroke="#333" stroke-width="0.8"/><rect x="10.5" y="666.5" width="7" height="5" fill="#9cc0e8" stroke="#333" stroke-width="0.8"/><rect x="24.5" y="666.5" width="7" height="5" fill="#9cc0e8" stroke="#333" stroke-width="0.8"/><rect x="19" y="660" width="6" height="4" fill="#f0d040" stroke="#333" stroke-width="0.7"/><path d="M20 657.5 V660 M14 666.5 V662 H19 M28 666.5 V662 H25" fill="none" stroke="#333" stroke-width="0.8"/><rect x="11" y="684" width="20" height="20" fill="url(#tbgreen)"/><path d="M15 688 L26 699" stroke="#222" stroke-width="1"/><rect x="13" y="686" width="4" height="4" fill="#fff" stroke="#222" stroke-width="0.8"/><rect x="25" y="698" width="4" height="4" fill="#fff" stroke="#222" stroke-width="0.8"/><path d="M14 732 L24 720" stroke="#333" stroke-width="2.4"/><path d="M24 720 L28 716 L31 719 L27 723Z" fill="#111"/><path d="M14 732 L13 735" stroke="#5080b0" stroke-width="2"/></svg>
<div class="a" style="left:1210px;top:151px;width:8px;height:749px;background:#efebe5"></div>
<div class="a" style="left:1217px;top:151px;width:1px;height:749px;background:#d9d0c2"></div>
<div class="a" style="left:1218px;top:151px;width:459px;height:25px;background:#ddd5c8;border-top:1px solid #d3c9b8;border-bottom:1px solid #d6ccbc"></div>
<div class="a" style="left:1219px;top:176px;width:458px;height:441px;border:1px solid #e2dacd;border-top:none;background:#efebe5"></div>
<svg class="a" style="left:1223px;top:155px" width="19" height="20" viewBox="0 0 19 20"><defs><linearGradient id="tgt" x1="0" y1="0" x2="1" y2="0"><stop offset="0" stop-color="#000"/><stop offset="0.6" stop-color="#111"/><stop offset="1" stop-color="#bbb"/></linearGradient><linearGradient id="tgl" x1="0" y1="0" x2="0" y2="1"><stop offset="0" stop-color="#000"/><stop offset="0.7" stop-color="#222"/><stop offset="1" stop-color="#ccc"/></linearGradient></defs><rect x="1" y="1" width="17" height="17" fill="#fff"/><rect x="1" y="1" width="17" height="3" fill="url(#tgt)"/><rect x="1" y="1" width="3" height="17" fill="url(#tgl)"/><path d="M1 18.5 C4 17 6 14 9 11 L15 5 L17.5 7.5 L11 13.5 C8.5 16 5 18.5 1 18.5Z" fill="#111"/><path d="M5 15.5 L11 9.5" stroke="#888" stroke-width="0.9"/><path d="M15 5 L18 2 V9 L17.5 7.5Z" fill="#f4b000"/></svg>
<div class="t" id="t26" style="left:1243px;top:158px;font-size:13.5px;color:#2e2a3a;font-weight:normal;transform:scaleX(1.2046);transform-origin:0 0;-webkit-text-stroke:0.25px #2e2a3a;">Polnilo in poteza&nbsp;&nbsp;[Dvigalka+Ctrl+F]</div>
<svg class="a" style="left:1635px;top:158px" width="12" height="12" viewBox="0 0 12 12"><rect x="0.5" y="0.5" width="11" height="11" rx="2" fill="none" stroke="#4a4540" stroke-width="1"/><path d="M4 3 L9 6 L4 9z" fill="#4a4540"/></svg>
<svg class="a" style="left:1658px;top:158px" width="12" height="12" viewBox="0 0 12 12"><rect x="0.5" y="0.5" width="11" height="11" rx="2" fill="none" stroke="#4a4540" stroke-width="1"/><path d="M3 3 L9 9 M9 3 L3 9" stroke="#4a4540" stroke-width="2"/></svg>
<div class="a" style="left:1224px;top:211px;width:448px;height:305px;border:1px solid #c9bba3;border-radius:0 3px 3px 3px;background:#efebe5"></div>
<div class="a" style="left:1305px;top:185px;width:130px;height:27px;background:#cfc3ad;border:1px solid #c4b69e;border-bottom:none;border-radius:3px 3px 0 0"></div>
<div class="a" style="left:1435px;top:185px;width:117px;height:27px;background:#cfc3ad;border:1px solid #c4b69e;border-bottom:none;border-radius:3px 3px 0 0"></div>
<div class="a" style="left:1224px;top:182px;width:83px;height:30px;background:linear-gradient(#f4f1ec,#efebe5);border:1px solid #cdbfa8;border-bottom:none;border-radius:3px 3px 0 0"></div>
<div class="a" style="left:1225px;top:210px;width:81px;height:2px;background:#efebe5"></div>
<div class="a" style="left:1230px;top:191px;width:11px;height:11px;background:linear-gradient(135deg,#8fb0d6,#f0f4fa)"></div>
<div class="t" id="t27" style="left:1243px;top:191px;font-size:13.5px;color:#2e2a3a;font-weight:normal;transform:scaleX(1.3098);transform-origin:0 0;-webkit-text-stroke:0.25px #2e2a3a;">Zapolni</div>
<div class="a" style="left:1311px;top:193px;width:11px;height:12px;border:1px solid #3a3630;border-right-color:#b8b0a4;border-bottom-color:#b8b0a4;border-radius:1px;background:#d8cfc0"></div>
<div class="t" id="t28" style="left:1324px;top:192px;font-size:13.5px;color:#2e2a3a;font-weight:normal;transform:scaleX(1.3323);transform-origin:0 0;-webkit-text-stroke:0.25px #2e2a3a;">Barva poteze</div>
<svg class="a" style="left:1439px;top:192px" width="13" height="12" viewBox="0 0 13 12"><path d="M0 3 H10 M0 6 H12 M0 9 H12 M0 11.5 H12" stroke="#222" stroke-width="1"/><path d="M8 0.5 L12 3 L8 5.5z" fill="#222"/></svg>
<div class="t" id="t29" style="left:1453px;top:192px;font-size:13.5px;color:#2e2a3a;font-weight:normal;transform:scaleX(1.2901);transform-origin:0 0;-webkit-text-stroke:0.25px #2e2a3a;">Slog poteze</div>
<svg class="a" style="left:1241px;top:229px" width="10" height="10" viewBox="0 0 10 10"><path d="M1.5 1.5 L8.5 8.5 M8.5 1.5 L1.5 8.5" stroke="#999" stroke-width="1.6"/></svg>
<div class="a" style="left:1267px;top:226px;width:15px;height:15px;border:1px solid #b8b2a8;background:#ddd9d2"></div>
<div class="a" style="left:1295px;top:226px;width:15px;height:15px;border:1px solid #b8b2a8;background:linear-gradient(90deg,#e2ded8,#f4f2ee)"></div>
<div class="a" style="left:1323px;top:226px;width:15px;height:15px;border:1px solid #b8b2a8;background:radial-gradient(#f8f6f2,#d8d4cc)"></div>
<svg class="a" style="left:1351px;top:226px" width="15" height="15" viewBox="0 0 15 15"><rect x="0.5" y="0.5" width="14" height="14" fill="#eeeae4" stroke="#b8b2a8"/><circle cx="4" cy="4" r="2.5" fill="#d8d3cb"/><circle cx="11" cy="4" r="2.5" fill="#d8d3cb"/><circle cx="4" cy="11" r="2.5" fill="#d8d3cb"/><circle cx="11" cy="11" r="2.5" fill="#d8d3cb"/></svg>
<div class="t" id="t30" style="left:1381px;top:224px;font-size:17px;color:#9c9690;font-weight:bold;transform:scaleX(0.9624);transform-origin:0 0;">?</div>
<svg class="a" style="left:1619px;top:227px" width="14" height="13" viewBox="0 0 14 13"><path d="M1 1 C0 6 2 12 7 12 C12 12 14 6 13 1 C11 3 9 4 7 4 C5 4 3 3 1 1Z" fill="#a09a92"/><ellipse cx="7" cy="8" rx="2.2" ry="3" fill="#efebe5"/></svg>
<div class="a" style="left:1640px;top:221px;width:22px;height:26px;border:1px solid #d5ccbd;border-radius:4px;background:linear-gradient(#fbfaf8,#e6e0d6)"></div>
<svg class="a" style="left:1644px;top:227px" width="15" height="15" viewBox="0 0 15 15"><path d="M1 1 C0 7 2 14 7.5 14 C13 14 15 7 14 1 C12 4 10 5 7.5 5 C5 5 3 4 1 1Z" fill="#9e9890"/></svg>
<div class="a" style="left:1229px;top:262px;width:437px;height:248px;border:1px solid #e0d6c6;border-radius:3px"></div>
<div class="a" style="left:1232px;top:252px;width:90px;height:14px;background:#efebe5"></div>
<div class="t" id="t31" style="left:1234px;top:254px;font-size:13.5px;color:#2e2a3a;font-weight:normal;transform:scaleX(1.2827);transform-origin:0 0;-webkit-text-stroke:0.25px #2e2a3a;">Ni predmetov</div>
<div class="t" id="t32" style="left:1228px;top:519px;font-size:13.5px;color:#b3a48c;font-weight:normal;transform:scaleX(1.3325);transform-origin:0 0;-webkit-text-stroke:0.3px #b3a48c;">Zabrisanost:</div>
<div class="a" style="left:1230px;top:543px;width:359px;height:8px;border:1px solid #cbbfaa;border-radius:4px;background:linear-gradient(#e6e0d6,#f6f3ee)"></div>
<div class="a" style="left:1230px;top:541px;width:27px;height:14px;border:1px solid #c9bca5;border-radius:7px;background:linear-gradient(#fdfcfa,#e8e2d8)"></div>
<div class="a" style="left:1241px;top:545px;width:1px;height:6px;background:#a99c86"></div>
<div class="a" style="left:1244px;top:545px;width:1px;height:6px;background:#a99c86"></div>
<div class="a" style="left:1592px;top:536px;width:79px;height:25px;border:1px solid #cdbfa8;border-radius:4px;background:#efebe5"></div>
<div class="a" style="left:1656px;top:537px;width:1px;height:23px;background:#d8cdbb"></div>
<div class="a" style="left:1657px;top:537px;width:13px;height:23px;border-radius:0 3px 3px 0;background:linear-gradient(90deg,#f5f2ed,#e9e3da)"></div>
<svg class="a" style="left:1658px;top:539px" width="11" height="19" viewBox="0 0 11 19"><path d="M2.5 7 L5.5 2 L8.5 7z M2.5 12 L5.5 17 L8.5 12z" fill="#b4a994"/></svg>
<div class="t" id="t33" style="left:1598px;top:542px;font-size:13.5px;color:#b09e86;font-weight:normal;transform:scaleX(1.2779);transform-origin:0 0;-webkit-text-stroke:0.3px #b09e86;">0,0</div>
<div class="t" id="t34" style="left:1228px;top:567px;font-size:13.5px;color:#2e2a3a;font-weight:normal;transform:scaleX(1.1145);transform-origin:0 0;-webkit-text-stroke:0.25px #2e2a3a;">Prekrivnost, %</div>
<div class="a" style="left:1231px;top:593px;width:330px;height:7px;border:1px solid #c8452e;border-radius:4px;background:linear-gradient(#f0705a,#e85a40)"></div>
<div class="a" style="left:1558px;top:595px;width:30px;height:3px;background:#d8d0c2;border-radius:2px"></div>
<div class="a" style="left:1557px;top:589px;width:28px;height:14px;border:1px solid #c9bca5;border-radius:7px;background:linear-gradient(#fdfcfa,#e8e2d8)"></div>
<div class="a" style="left:1569px;top:593px;width:1px;height:6px;background:#a99c86"></div>
<div class="a" style="left:1572px;top:593px;width:1px;height:6px;background:#a99c86"></div>
<div class="a" style="left:1592px;top:584px;width:79px;height:25px;border:1px solid #cdbfa8;border-radius:4px;background:#efebe5"></div>
<div class="a" style="left:1656px;top:585px;width:1px;height:23px;background:#d8cdbb"></div>
<div class="a" style="left:1657px;top:585px;width:13px;height:23px;border-radius:0 3px 3px 0;background:linear-gradient(90deg,#f5f2ed,#e9e3da)"></div>
<svg class="a" style="left:1658px;top:587px" width="11" height="19" viewBox="0 0 11 19"><path d="M2.5 7 L5.5 2 L8.5 7z M2.5 12 L5.5 17 L8.5 12z" fill="#b4a994"/></svg>
<div class="t" id="t35" style="left:1598px;top:590px;font-size:13.5px;color:#b09e86;font-weight:normal;transform:scaleX(1.1835);transform-origin:0 0;-webkit-text-stroke:0.3px #b09e86;">100,0</div>
<div class="a" style="left:1219px;top:616px;width:458px;height:1px;background:#e0d8ca"></div>
<div class="a" style="left:1444px;top:620px;width:1px;height:4px;background:#d6cbb8"></div>
<div class="a" style="left:1447px;top:620px;width:1px;height:4px;background:#d6cbb8"></div>
<div class="a" style="left:1450px;top:620px;width:1px;height:4px;background:#d6cbb8"></div>
<div class="a" style="left:1676px;top:176px;width:1px;height:441px;background:#e2dacd"></div>
<div class="a" style="left:1678px;top:617px;width:1px;height:285px;background:#dccfbc"></div>
<div class="a" style="left:1440px;top:901px;width:239px;height:1px;background:#dccfbc"></div>
<div class="a" style="left:1212px;top:524px;width:4px;height:1px;background:#d6cbb8"></div>
<div class="a" style="left:1212px;top:527px;width:4px;height:1px;background:#d6cbb8"></div>
<div class="a" style="left:1212px;top:530px;width:4px;height:1px;background:#d6cbb8"></div></body></html>
